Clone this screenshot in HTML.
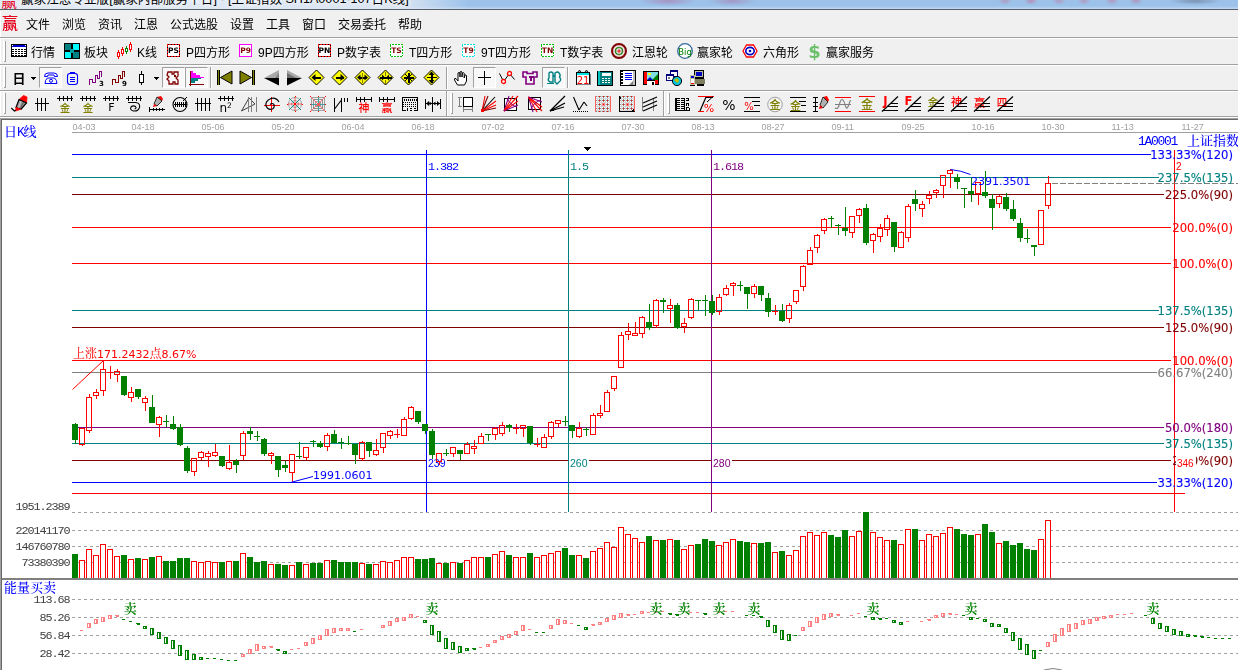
<!DOCTYPE html>
<html lang="zh-CN"><head><meta charset="utf-8"><title>赢家江恩专业版</title>
<style>
html,body{margin:0;padding:0;}
body{width:1238px;height:670px;overflow:hidden;position:relative;background:#f0f0f0;font-family:"Liberation Sans","Noto Sans CJK SC",sans-serif;font-size:12px;color:#000;}
.abs{position:absolute;}
.title{left:0;top:0;width:1238px;height:9px;overflow:hidden;background:
radial-gradient(ellipse 28px 5px at 668px 1px,rgba(170,110,160,.55),rgba(170,110,160,0)),
radial-gradient(ellipse 24px 5px at 732px 1px,rgba(170,110,160,.5),rgba(170,110,160,0)),
radial-gradient(ellipse 7px 4px at 1005px 1px,rgba(200,110,150,.45),rgba(200,110,150,0)),
radial-gradient(ellipse 7px 4px at 1031px 1px,rgba(200,90,130,.5),rgba(200,110,150,0)),
radial-gradient(ellipse 7px 4px at 1059px 1px,rgba(200,110,150,.45),rgba(200,110,150,0)),
radial-gradient(ellipse 7px 4px at 1084px 1px,rgba(200,110,150,.45),rgba(200,110,150,0)),
radial-gradient(ellipse 7px 4px at 1112px 1px,rgba(200,110,150,.5),rgba(200,110,150,0)),
radial-gradient(ellipse 7px 4px at 1136px 1px,rgba(200,100,140,.45),rgba(200,110,150,0)),
radial-gradient(ellipse 26px 4px at 1195px 1px,rgba(90,100,120,.5),rgba(90,100,120,0)),
linear-gradient(90deg,rgba(226,234,244,1) 0,rgba(222,231,243,.95) 400px,rgba(222,231,243,0) 470px),
linear-gradient(#9cc2ea 0,#9cc2ea 6px,#b4d0ee 8px,#c8dcf2 9px);}
.title i{position:absolute;left:1px;top:-12.5px;font-style:normal;font-size:16px;color:#e8001c;}
.title span{position:absolute;left:21px;top:-11.6px;font-size:12.6px;white-space:nowrap;text-shadow:0 0 4px #fff,0 0 6px #fff;}
.tline{left:0;width:1238px;height:1px;}
.mi{top:16px;font-size:12px;line-height:18px;height:18px;white-space:nowrap;}
.tb{font-size:12px;line-height:18px;height:18px;white-space:nowrap;}
.ic{width:16px;height:16px;overflow:visible;}
.grip{width:2px;background:#fff;border-right:1px solid #a0a0a0;}
body:before{content:'';position:absolute;left:0;top:11px;width:1px;height:105px;background:#fff;}
.sep{width:1px;background:#a0a0a0;border-right:1px solid #fff;}
.pressed{border:1px solid;border-color:#a0a0a0 #fff #fff #a0a0a0;background:#f8f8f8;box-sizing:border-box;}
svg.chart{position:absolute;left:0;top:0;will-change:transform;}
svg.chart text{font-family:"DejaVu Sans","Noto Sans CJK SC",sans-serif;}
svg.chart .dt{font-family:"Liberation Sans",sans-serif;font-size:9px;fill:#a0a0a0;}
svg.chart .lab{font-family:"DejaVu Sans","Noto Serif CJK SC",sans-serif;font-size:11.6px;}
svg.chart .l11{font-size:11px;}
svg.chart .sm{font-family:"Liberation Sans",sans-serif;font-size:10px;}
svg.chart .song12{font-family:"Liberation Mono","Noto Serif CJK SC",serif;font-size:12px;}
svg.chart .song13{font-family:"Liberation Mono","Noto Serif CJK SC",serif;font-size:13px;font-weight:500;}
svg.chart .nar{letter-spacing:-1.3px;}
svg.chart .mono{font-family:"Liberation Mono",monospace;font-size:11.8px;letter-spacing:-1.08px;}
svg.chart .sell{font-family:"Liberation Serif","Noto Serif CJK SC",serif;font-size:13px;fill:#008000;font-weight:600;}
</style></head><body>
<svg class="chart" width="1238" height="670" viewBox="0 0 1238 670" shape-rendering="crispEdges"><rect x="0" y="118" width="1238" height="552" fill="#fff"/><rect x="0" y="118" width="1238" height="1" fill="#a0a0a0"/><rect x="0" y="119" width="1238" height="1" fill="#696969"/><rect x="0" y="118" width="1" height="552" fill="#a0a0a0"/><rect x="1" y="119" width="1" height="551" fill="#696969"/><rect x="72" y="132" width="1166" height="1" fill="#a0a0a0"/><text x="72.5" y="129.6" class="dt">04-03</text><text x="131.5" y="129.6" class="dt">04-18</text><text x="201.5" y="129.6" class="dt">05-06</text><text x="271.5" y="129.6" class="dt">05-20</text><text x="341.5" y="129.6" class="dt">06-04</text><text x="411.5" y="129.6" class="dt">06-18</text><text x="481.5" y="129.6" class="dt">07-02</text><text x="551.5" y="129.6" class="dt">07-16</text><text x="621.5" y="129.6" class="dt">07-30</text><text x="691.5" y="129.6" class="dt">08-13</text><text x="761.5" y="129.6" class="dt">08-27</text><text x="831.5" y="129.6" class="dt">09-11</text><text x="901.5" y="129.6" class="dt">09-25</text><text x="971.5" y="129.6" class="dt">10-16</text><text x="1041.5" y="129.6" class="dt">10-30</text><text x="1111.5" y="129.6" class="dt">11-13</text><text x="1181.5" y="129.6" class="dt">11-27</text><rect x="72" y="154" width="1079" height="1" fill="#0000ff"/><rect x="72" y="177" width="1087" height="1" fill="#008080"/><rect x="72" y="194" width="1092" height="1" fill="#800000"/><rect x="72" y="227" width="1099" height="1" fill="#ff0000"/><rect x="72" y="263" width="1099" height="1" fill="#ff0000"/><rect x="72" y="310" width="1087" height="1" fill="#008080"/><rect x="72" y="327" width="1092" height="1" fill="#800000"/><rect x="72" y="360" width="1099" height="1" fill="#ff0000"/><rect x="72" y="372" width="1085" height="1" fill="#808080"/><rect x="72" y="427" width="1092" height="1" fill="#800080"/><rect x="72" y="443" width="1092" height="1" fill="#008080"/><rect x="72" y="460" width="1099" height="1" fill="#800000"/><rect x="72" y="482" width="1085" height="1" fill="#0000ff"/><rect x="72" y="493" width="1113" height="1" fill="#ff0000"/><rect x="426" y="150" width="1" height="362" fill="#0000ff"/><rect x="568" y="150" width="1" height="362" fill="#008080"/><rect x="711" y="150" width="1" height="362" fill="#800080"/><rect x="1174" y="150" width="1" height="362" fill="#ff0000"/><line x1="72" y1="512.5" x2="1238" y2="512.5" stroke="#a0a0a0" stroke-width="1" stroke-dasharray="3 3"/><line x1="72" y1="530.5" x2="1238" y2="530.5" stroke="#a0a0a0" stroke-width="1" stroke-dasharray="3 3"/><line x1="72" y1="546.5" x2="1238" y2="546.5" stroke="#a0a0a0" stroke-width="1" stroke-dasharray="3 3"/><line x1="72" y1="562.5" x2="1238" y2="562.5" stroke="#a0a0a0" stroke-width="1" stroke-dasharray="3 3"/><line x1="72" y1="599.5" x2="1238" y2="599.5" stroke="#a0a0a0" stroke-width="1" stroke-dasharray="3 3"/><line x1="72" y1="617.5" x2="1238" y2="617.5" stroke="#a0a0a0" stroke-width="1" stroke-dasharray="3 3"/><line x1="72" y1="635.5" x2="1238" y2="635.5" stroke="#a0a0a0" stroke-width="1" stroke-dasharray="3 3"/><line x1="72" y1="653.5" x2="1238" y2="653.5" stroke="#a0a0a0" stroke-width="1" stroke-dasharray="3 3"/><line x1="1052" y1="183.5" x2="1238" y2="183.5" stroke="#808080" stroke-width="1" stroke-dasharray="6 2"/><rect x="427" y="458" width="20" height="11" fill="#fff"/><text x="428" y="467" class="sm" style="font-size:10.5px" fill="#0000ff">239</text><rect x="569" y="458" width="20" height="11" fill="#fff"/><text x="570" y="467" class="sm" style="font-size:10.5px" fill="#008080">260</text><rect x="712" y="458" width="20" height="11" fill="#fff"/><text x="713" y="467" class="sm" style="font-size:10.5px" fill="#800080">280</text><rect x="75" y="423" width="1" height="1" fill="#008000"/><rect x="75" y="440" width="1" height="4" fill="#008000"/><rect x="72" y="424" width="6" height="16" fill="#008000"/><rect x="82" y="445" width="1" height="1" fill="#ff0000"/><rect x="79" y="428" width="6" height="1" fill="#ff0000"/><rect x="79" y="444" width="6" height="1" fill="#ff0000"/><rect x="79" y="429" width="1" height="15" fill="#ff0000"/><rect x="84" y="429" width="1" height="15" fill="#ff0000"/><rect x="89" y="394" width="1" height="3" fill="#ff0000"/><rect x="89" y="431" width="1" height="2" fill="#ff0000"/><rect x="86" y="397" width="6" height="1" fill="#ff0000"/><rect x="86" y="430" width="6" height="1" fill="#ff0000"/><rect x="86" y="398" width="1" height="32" fill="#ff0000"/><rect x="91" y="398" width="1" height="32" fill="#ff0000"/><rect x="96" y="389" width="1" height="3" fill="#ff0000"/><rect x="96" y="396" width="1" height="3" fill="#ff0000"/><rect x="93" y="392" width="6" height="1" fill="#ff0000"/><rect x="93" y="395" width="6" height="1" fill="#ff0000"/><rect x="93" y="393" width="1" height="2" fill="#ff0000"/><rect x="98" y="393" width="1" height="2" fill="#ff0000"/><rect x="103" y="361" width="1" height="8" fill="#ff0000"/><rect x="103" y="391" width="1" height="5" fill="#ff0000"/><rect x="100" y="369" width="6" height="1" fill="#ff0000"/><rect x="100" y="390" width="6" height="1" fill="#ff0000"/><rect x="100" y="370" width="1" height="20" fill="#ff0000"/><rect x="105" y="370" width="1" height="20" fill="#ff0000"/><rect x="110" y="366" width="1" height="6" fill="#ff0000"/><rect x="110" y="373" width="1" height="6" fill="#ff0000"/><rect x="107" y="372" width="6" height="1" fill="#ff0000"/><rect x="117" y="369" width="1" height="2" fill="#ff0000"/><rect x="117" y="375" width="1" height="7" fill="#ff0000"/><rect x="114" y="371" width="6" height="1" fill="#ff0000"/><rect x="114" y="374" width="6" height="1" fill="#ff0000"/><rect x="114" y="372" width="1" height="2" fill="#ff0000"/><rect x="119" y="372" width="1" height="2" fill="#ff0000"/><rect x="124" y="395" width="1" height="1" fill="#008000"/><rect x="121" y="376" width="6" height="19" fill="#008000"/><rect x="131" y="387" width="1" height="5" fill="#ff0000"/><rect x="131" y="398" width="1" height="4" fill="#ff0000"/><rect x="128" y="392" width="6" height="1" fill="#ff0000"/><rect x="128" y="397" width="6" height="1" fill="#ff0000"/><rect x="128" y="393" width="1" height="4" fill="#ff0000"/><rect x="133" y="393" width="1" height="4" fill="#ff0000"/><rect x="138" y="397" width="1" height="2" fill="#008000"/><rect x="135" y="389" width="6" height="8" fill="#008000"/><rect x="145" y="396" width="1" height="2" fill="#ff0000"/><rect x="145" y="403" width="1" height="8" fill="#ff0000"/><rect x="142" y="398" width="6" height="1" fill="#ff0000"/><rect x="142" y="402" width="6" height="1" fill="#ff0000"/><rect x="142" y="399" width="1" height="3" fill="#ff0000"/><rect x="147" y="399" width="1" height="3" fill="#ff0000"/><rect x="152" y="395" width="1" height="12" fill="#008000"/><rect x="149" y="407" width="6" height="16" fill="#008000"/><rect x="159" y="416" width="1" height="1" fill="#ff0000"/><rect x="159" y="425" width="1" height="12" fill="#ff0000"/><rect x="156" y="417" width="6" height="1" fill="#ff0000"/><rect x="156" y="424" width="6" height="1" fill="#ff0000"/><rect x="156" y="418" width="1" height="6" fill="#ff0000"/><rect x="161" y="418" width="1" height="6" fill="#ff0000"/><rect x="166" y="415" width="1" height="6" fill="#008000"/><rect x="166" y="422" width="1" height="5" fill="#008000"/><rect x="163" y="421" width="6" height="1" fill="#008000"/><rect x="173" y="416" width="1" height="8" fill="#008000"/><rect x="173" y="429" width="1" height="1" fill="#008000"/><rect x="170" y="424" width="6" height="5" fill="#008000"/><rect x="180" y="424" width="1" height="3" fill="#008000"/><rect x="180" y="445" width="1" height="1" fill="#008000"/><rect x="177" y="427" width="6" height="18" fill="#008000"/><rect x="187" y="446" width="1" height="2" fill="#008000"/><rect x="187" y="471" width="1" height="2" fill="#008000"/><rect x="184" y="448" width="6" height="23" fill="#008000"/><rect x="194" y="472" width="1" height="4" fill="#ff0000"/><rect x="191" y="458" width="6" height="1" fill="#ff0000"/><rect x="191" y="471" width="6" height="1" fill="#ff0000"/><rect x="191" y="459" width="1" height="12" fill="#ff0000"/><rect x="196" y="459" width="1" height="12" fill="#ff0000"/><rect x="201" y="451" width="1" height="1" fill="#ff0000"/><rect x="201" y="458" width="1" height="2" fill="#ff0000"/><rect x="198" y="452" width="6" height="1" fill="#ff0000"/><rect x="198" y="457" width="6" height="1" fill="#ff0000"/><rect x="198" y="453" width="1" height="4" fill="#ff0000"/><rect x="203" y="453" width="1" height="4" fill="#ff0000"/><rect x="208" y="451" width="1" height="2" fill="#ff0000"/><rect x="208" y="457" width="1" height="10" fill="#ff0000"/><rect x="205" y="453" width="6" height="1" fill="#ff0000"/><rect x="205" y="456" width="6" height="1" fill="#ff0000"/><rect x="205" y="454" width="1" height="2" fill="#ff0000"/><rect x="210" y="454" width="1" height="2" fill="#ff0000"/><rect x="215" y="444" width="1" height="8" fill="#ff0000"/><rect x="215" y="456" width="1" height="1" fill="#ff0000"/><rect x="212" y="452" width="6" height="1" fill="#ff0000"/><rect x="212" y="455" width="6" height="1" fill="#ff0000"/><rect x="212" y="453" width="1" height="2" fill="#ff0000"/><rect x="217" y="453" width="1" height="2" fill="#ff0000"/><rect x="222" y="466" width="1" height="1" fill="#008000"/><rect x="219" y="456" width="6" height="10" fill="#008000"/><rect x="229" y="445" width="1" height="17" fill="#ff0000"/><rect x="229" y="469" width="1" height="1" fill="#ff0000"/><rect x="226" y="462" width="6" height="1" fill="#ff0000"/><rect x="226" y="468" width="6" height="1" fill="#ff0000"/><rect x="226" y="463" width="1" height="5" fill="#ff0000"/><rect x="231" y="463" width="1" height="5" fill="#ff0000"/><rect x="236" y="459" width="1" height="2" fill="#008000"/><rect x="236" y="465" width="1" height="8" fill="#008000"/><rect x="233" y="461" width="6" height="4" fill="#008000"/><rect x="243" y="431" width="1" height="2" fill="#ff0000"/><rect x="243" y="456" width="1" height="4" fill="#ff0000"/><rect x="240" y="433" width="6" height="1" fill="#ff0000"/><rect x="240" y="455" width="6" height="1" fill="#ff0000"/><rect x="240" y="434" width="1" height="21" fill="#ff0000"/><rect x="245" y="434" width="1" height="21" fill="#ff0000"/><rect x="250" y="427" width="1" height="4" fill="#008000"/><rect x="250" y="434" width="1" height="6" fill="#008000"/><rect x="247" y="431" width="6" height="3" fill="#008000"/><rect x="257" y="431" width="1" height="5" fill="#008000"/><rect x="257" y="437" width="1" height="4" fill="#008000"/><rect x="254" y="436" width="6" height="1" fill="#008000"/><rect x="264" y="438" width="1" height="1" fill="#008000"/><rect x="264" y="454" width="1" height="2" fill="#008000"/><rect x="261" y="439" width="6" height="15" fill="#008000"/><rect x="271" y="452" width="1" height="1" fill="#ff0000"/><rect x="271" y="456" width="1" height="8" fill="#ff0000"/><rect x="268" y="453" width="6" height="1" fill="#ff0000"/><rect x="268" y="455" width="6" height="1" fill="#ff0000"/><rect x="268" y="454" width="1" height="1" fill="#ff0000"/><rect x="273" y="454" width="1" height="1" fill="#ff0000"/><rect x="278" y="470" width="1" height="7" fill="#008000"/><rect x="275" y="456" width="6" height="14" fill="#008000"/><rect x="285" y="461" width="1" height="4" fill="#008000"/><rect x="285" y="468" width="1" height="4" fill="#008000"/><rect x="282" y="465" width="6" height="3" fill="#008000"/><rect x="292" y="473" width="1" height="9" fill="#ff0000"/><rect x="289" y="454" width="6" height="1" fill="#ff0000"/><rect x="289" y="472" width="6" height="1" fill="#ff0000"/><rect x="289" y="455" width="1" height="17" fill="#ff0000"/><rect x="294" y="455" width="1" height="17" fill="#ff0000"/><rect x="299" y="442" width="1" height="14" fill="#008000"/><rect x="299" y="457" width="1" height="2" fill="#008000"/><rect x="296" y="456" width="6" height="1" fill="#008000"/><rect x="306" y="458" width="1" height="2" fill="#ff0000"/><rect x="303" y="447" width="6" height="1" fill="#ff0000"/><rect x="303" y="457" width="6" height="1" fill="#ff0000"/><rect x="303" y="448" width="1" height="9" fill="#ff0000"/><rect x="308" y="448" width="1" height="9" fill="#ff0000"/><rect x="313" y="440" width="1" height="1" fill="#008000"/><rect x="313" y="442" width="1" height="5" fill="#008000"/><rect x="310" y="441" width="6" height="1" fill="#008000"/><rect x="320" y="441" width="1" height="2" fill="#008000"/><rect x="320" y="447" width="1" height="1" fill="#008000"/><rect x="317" y="443" width="6" height="4" fill="#008000"/><rect x="327" y="433" width="1" height="2" fill="#ff0000"/><rect x="327" y="447" width="1" height="4" fill="#ff0000"/><rect x="324" y="435" width="6" height="1" fill="#ff0000"/><rect x="324" y="446" width="6" height="1" fill="#ff0000"/><rect x="324" y="436" width="1" height="10" fill="#ff0000"/><rect x="329" y="436" width="1" height="10" fill="#ff0000"/><rect x="334" y="430" width="1" height="4" fill="#008000"/><rect x="331" y="434" width="6" height="9" fill="#008000"/><rect x="341" y="438" width="1" height="4" fill="#008000"/><rect x="341" y="443" width="1" height="6" fill="#008000"/><rect x="338" y="442" width="6" height="1" fill="#008000"/><rect x="348" y="436" width="1" height="7" fill="#008000"/><rect x="348" y="444" width="1" height="1" fill="#008000"/><rect x="345" y="443" width="6" height="1" fill="#008000"/><rect x="355" y="455" width="1" height="9" fill="#008000"/><rect x="352" y="444" width="6" height="11" fill="#008000"/><rect x="362" y="441" width="1" height="1" fill="#ff0000"/><rect x="362" y="459" width="1" height="2" fill="#ff0000"/><rect x="359" y="442" width="6" height="1" fill="#ff0000"/><rect x="359" y="458" width="6" height="1" fill="#ff0000"/><rect x="359" y="443" width="1" height="15" fill="#ff0000"/><rect x="364" y="443" width="1" height="15" fill="#ff0000"/><rect x="369" y="451" width="1" height="6" fill="#008000"/><rect x="366" y="442" width="6" height="9" fill="#008000"/><rect x="376" y="439" width="1" height="11" fill="#ff0000"/><rect x="376" y="455" width="1" height="1" fill="#ff0000"/><rect x="373" y="450" width="6" height="1" fill="#ff0000"/><rect x="373" y="454" width="6" height="1" fill="#ff0000"/><rect x="373" y="451" width="1" height="3" fill="#ff0000"/><rect x="378" y="451" width="1" height="3" fill="#ff0000"/><rect x="383" y="448" width="1" height="5" fill="#ff0000"/><rect x="380" y="433" width="6" height="1" fill="#ff0000"/><rect x="380" y="447" width="6" height="1" fill="#ff0000"/><rect x="380" y="434" width="1" height="13" fill="#ff0000"/><rect x="385" y="434" width="1" height="13" fill="#ff0000"/><rect x="390" y="430" width="1" height="1" fill="#ff0000"/><rect x="390" y="436" width="1" height="3" fill="#ff0000"/><rect x="387" y="431" width="6" height="1" fill="#ff0000"/><rect x="387" y="435" width="6" height="1" fill="#ff0000"/><rect x="387" y="432" width="1" height="3" fill="#ff0000"/><rect x="392" y="432" width="1" height="3" fill="#ff0000"/><rect x="397" y="429" width="1" height="5" fill="#ff0000"/><rect x="397" y="435" width="1" height="3" fill="#ff0000"/><rect x="394" y="434" width="6" height="1" fill="#ff0000"/><rect x="404" y="417" width="1" height="2" fill="#ff0000"/><rect x="401" y="419" width="6" height="1" fill="#ff0000"/><rect x="401" y="435" width="6" height="1" fill="#ff0000"/><rect x="401" y="420" width="1" height="15" fill="#ff0000"/><rect x="406" y="420" width="1" height="15" fill="#ff0000"/><rect x="411" y="406" width="1" height="1" fill="#ff0000"/><rect x="411" y="419" width="1" height="1" fill="#ff0000"/><rect x="408" y="407" width="6" height="1" fill="#ff0000"/><rect x="408" y="418" width="6" height="1" fill="#ff0000"/><rect x="408" y="408" width="1" height="10" fill="#ff0000"/><rect x="413" y="408" width="1" height="10" fill="#ff0000"/><rect x="418" y="422" width="1" height="2" fill="#008000"/><rect x="415" y="411" width="6" height="11" fill="#008000"/><rect x="425" y="431" width="1" height="3" fill="#008000"/><rect x="422" y="424" width="6" height="7" fill="#008000"/><rect x="432" y="429" width="1" height="2" fill="#008000"/><rect x="432" y="455" width="1" height="4" fill="#008000"/><rect x="429" y="431" width="6" height="24" fill="#008000"/><rect x="439" y="462" width="1" height="3" fill="#ff0000"/><rect x="436" y="453" width="6" height="1" fill="#ff0000"/><rect x="436" y="461" width="6" height="1" fill="#ff0000"/><rect x="436" y="454" width="1" height="7" fill="#ff0000"/><rect x="441" y="454" width="1" height="7" fill="#ff0000"/><rect x="446" y="449" width="1" height="4" fill="#008000"/><rect x="446" y="454" width="1" height="2" fill="#008000"/><rect x="443" y="453" width="6" height="1" fill="#008000"/><rect x="453" y="454" width="1" height="3" fill="#ff0000"/><rect x="450" y="447" width="6" height="1" fill="#ff0000"/><rect x="450" y="453" width="6" height="1" fill="#ff0000"/><rect x="450" y="448" width="1" height="5" fill="#ff0000"/><rect x="455" y="448" width="1" height="5" fill="#ff0000"/><rect x="460" y="454" width="1" height="6" fill="#008000"/><rect x="457" y="450" width="6" height="4" fill="#008000"/><rect x="467" y="442" width="1" height="2" fill="#ff0000"/><rect x="464" y="444" width="6" height="1" fill="#ff0000"/><rect x="464" y="453" width="6" height="1" fill="#ff0000"/><rect x="464" y="445" width="1" height="8" fill="#ff0000"/><rect x="469" y="445" width="1" height="8" fill="#ff0000"/><rect x="474" y="440" width="1" height="6" fill="#ff0000"/><rect x="474" y="449" width="1" height="5" fill="#ff0000"/><rect x="471" y="446" width="6" height="1" fill="#ff0000"/><rect x="471" y="448" width="6" height="1" fill="#ff0000"/><rect x="471" y="447" width="1" height="1" fill="#ff0000"/><rect x="476" y="447" width="1" height="1" fill="#ff0000"/><rect x="481" y="433" width="1" height="3" fill="#ff0000"/><rect x="478" y="436" width="6" height="1" fill="#ff0000"/><rect x="478" y="443" width="6" height="1" fill="#ff0000"/><rect x="478" y="437" width="1" height="6" fill="#ff0000"/><rect x="483" y="437" width="1" height="6" fill="#ff0000"/><rect x="488" y="435" width="1" height="6" fill="#008000"/><rect x="485" y="434" width="6" height="1" fill="#008000"/><rect x="495" y="427" width="1" height="1" fill="#ff0000"/><rect x="495" y="435" width="1" height="5" fill="#ff0000"/><rect x="492" y="428" width="6" height="1" fill="#ff0000"/><rect x="492" y="434" width="6" height="1" fill="#ff0000"/><rect x="492" y="429" width="1" height="5" fill="#ff0000"/><rect x="497" y="429" width="1" height="5" fill="#ff0000"/><rect x="502" y="422" width="1" height="3" fill="#ff0000"/><rect x="502" y="434" width="1" height="2" fill="#ff0000"/><rect x="499" y="425" width="6" height="1" fill="#ff0000"/><rect x="499" y="433" width="6" height="1" fill="#ff0000"/><rect x="499" y="426" width="1" height="7" fill="#ff0000"/><rect x="504" y="426" width="1" height="7" fill="#ff0000"/><rect x="509" y="424" width="1" height="1" fill="#008000"/><rect x="509" y="428" width="1" height="4" fill="#008000"/><rect x="506" y="425" width="6" height="3" fill="#008000"/><rect x="516" y="424" width="1" height="4" fill="#ff0000"/><rect x="516" y="429" width="1" height="5" fill="#ff0000"/><rect x="513" y="428" width="6" height="1" fill="#ff0000"/><rect x="523" y="429" width="1" height="8" fill="#ff0000"/><rect x="520" y="425" width="6" height="1" fill="#ff0000"/><rect x="520" y="428" width="6" height="1" fill="#ff0000"/><rect x="520" y="426" width="1" height="2" fill="#ff0000"/><rect x="525" y="426" width="1" height="2" fill="#ff0000"/><rect x="530" y="443" width="1" height="2" fill="#008000"/><rect x="527" y="426" width="6" height="17" fill="#008000"/><rect x="537" y="438" width="1" height="6" fill="#ff0000"/><rect x="537" y="445" width="1" height="2" fill="#ff0000"/><rect x="534" y="444" width="6" height="1" fill="#ff0000"/><rect x="544" y="434" width="1" height="3" fill="#ff0000"/><rect x="541" y="437" width="6" height="1" fill="#ff0000"/><rect x="541" y="447" width="6" height="1" fill="#ff0000"/><rect x="541" y="438" width="1" height="9" fill="#ff0000"/><rect x="546" y="438" width="1" height="9" fill="#ff0000"/><rect x="551" y="421" width="1" height="1" fill="#ff0000"/><rect x="551" y="437" width="1" height="2" fill="#ff0000"/><rect x="548" y="422" width="6" height="1" fill="#ff0000"/><rect x="548" y="436" width="6" height="1" fill="#ff0000"/><rect x="548" y="423" width="1" height="13" fill="#ff0000"/><rect x="553" y="423" width="1" height="13" fill="#ff0000"/><rect x="558" y="424" width="1" height="3" fill="#ff0000"/><rect x="555" y="420" width="6" height="1" fill="#ff0000"/><rect x="555" y="423" width="6" height="1" fill="#ff0000"/><rect x="555" y="421" width="1" height="2" fill="#ff0000"/><rect x="560" y="421" width="1" height="2" fill="#ff0000"/><rect x="565" y="416" width="1" height="5" fill="#008000"/><rect x="565" y="422" width="1" height="4" fill="#008000"/><rect x="562" y="421" width="6" height="1" fill="#008000"/><rect x="572" y="431" width="1" height="7" fill="#008000"/><rect x="569" y="425" width="6" height="6" fill="#008000"/><rect x="579" y="422" width="1" height="6" fill="#ff0000"/><rect x="579" y="437" width="1" height="1" fill="#ff0000"/><rect x="576" y="428" width="6" height="1" fill="#ff0000"/><rect x="576" y="436" width="6" height="1" fill="#ff0000"/><rect x="576" y="429" width="1" height="7" fill="#ff0000"/><rect x="581" y="429" width="1" height="7" fill="#ff0000"/><rect x="586" y="427" width="1" height="2" fill="#008000"/><rect x="586" y="430" width="1" height="6" fill="#008000"/><rect x="583" y="429" width="6" height="1" fill="#008000"/><rect x="593" y="413" width="1" height="2" fill="#ff0000"/><rect x="590" y="415" width="6" height="1" fill="#ff0000"/><rect x="590" y="434" width="6" height="1" fill="#ff0000"/><rect x="590" y="416" width="1" height="18" fill="#ff0000"/><rect x="595" y="416" width="1" height="18" fill="#ff0000"/><rect x="600" y="405" width="1" height="8" fill="#ff0000"/><rect x="600" y="416" width="1" height="2" fill="#ff0000"/><rect x="597" y="413" width="6" height="1" fill="#ff0000"/><rect x="597" y="415" width="6" height="1" fill="#ff0000"/><rect x="597" y="414" width="1" height="1" fill="#ff0000"/><rect x="602" y="414" width="1" height="1" fill="#ff0000"/><rect x="607" y="390" width="1" height="2" fill="#ff0000"/><rect x="604" y="392" width="6" height="1" fill="#ff0000"/><rect x="604" y="411" width="6" height="1" fill="#ff0000"/><rect x="604" y="393" width="1" height="18" fill="#ff0000"/><rect x="609" y="393" width="1" height="18" fill="#ff0000"/><rect x="614" y="389" width="1" height="2" fill="#ff0000"/><rect x="611" y="376" width="6" height="1" fill="#ff0000"/><rect x="611" y="388" width="6" height="1" fill="#ff0000"/><rect x="611" y="377" width="1" height="11" fill="#ff0000"/><rect x="616" y="377" width="1" height="11" fill="#ff0000"/><rect x="621" y="332" width="1" height="3" fill="#ff0000"/><rect x="618" y="335" width="6" height="1" fill="#ff0000"/><rect x="618" y="367" width="6" height="1" fill="#ff0000"/><rect x="618" y="336" width="1" height="31" fill="#ff0000"/><rect x="623" y="336" width="1" height="31" fill="#ff0000"/><rect x="628" y="323" width="1" height="8" fill="#ff0000"/><rect x="628" y="335" width="1" height="5" fill="#ff0000"/><rect x="625" y="331" width="6" height="1" fill="#ff0000"/><rect x="625" y="334" width="6" height="1" fill="#ff0000"/><rect x="625" y="332" width="1" height="2" fill="#ff0000"/><rect x="630" y="332" width="1" height="2" fill="#ff0000"/><rect x="635" y="322" width="1" height="11" fill="#ff0000"/><rect x="632" y="333" width="6" height="1" fill="#ff0000"/><rect x="632" y="335" width="6" height="1" fill="#ff0000"/><rect x="632" y="334" width="1" height="1" fill="#ff0000"/><rect x="637" y="334" width="1" height="1" fill="#ff0000"/><rect x="642" y="316" width="1" height="1" fill="#ff0000"/><rect x="642" y="334" width="1" height="4" fill="#ff0000"/><rect x="639" y="317" width="6" height="1" fill="#ff0000"/><rect x="639" y="333" width="6" height="1" fill="#ff0000"/><rect x="639" y="318" width="1" height="15" fill="#ff0000"/><rect x="644" y="318" width="1" height="15" fill="#ff0000"/><rect x="649" y="304" width="1" height="18" fill="#008000"/><rect x="649" y="328" width="1" height="2" fill="#008000"/><rect x="646" y="322" width="6" height="6" fill="#008000"/><rect x="656" y="299" width="1" height="1" fill="#ff0000"/><rect x="656" y="326" width="1" height="2" fill="#ff0000"/><rect x="653" y="300" width="6" height="1" fill="#ff0000"/><rect x="653" y="325" width="6" height="1" fill="#ff0000"/><rect x="653" y="301" width="1" height="24" fill="#ff0000"/><rect x="658" y="301" width="1" height="24" fill="#ff0000"/><rect x="663" y="298" width="1" height="2" fill="#008000"/><rect x="663" y="302" width="1" height="11" fill="#008000"/><rect x="660" y="300" width="6" height="2" fill="#008000"/><rect x="670" y="299" width="1" height="6" fill="#ff0000"/><rect x="670" y="309" width="1" height="14" fill="#ff0000"/><rect x="667" y="305" width="6" height="1" fill="#ff0000"/><rect x="667" y="308" width="6" height="1" fill="#ff0000"/><rect x="667" y="306" width="1" height="2" fill="#ff0000"/><rect x="672" y="306" width="1" height="2" fill="#ff0000"/><rect x="677" y="303" width="1" height="2" fill="#008000"/><rect x="677" y="328" width="1" height="1" fill="#008000"/><rect x="674" y="305" width="6" height="23" fill="#008000"/><rect x="684" y="318" width="1" height="5" fill="#ff0000"/><rect x="684" y="327" width="1" height="6" fill="#ff0000"/><rect x="681" y="323" width="6" height="1" fill="#ff0000"/><rect x="681" y="326" width="6" height="1" fill="#ff0000"/><rect x="681" y="324" width="1" height="2" fill="#ff0000"/><rect x="686" y="324" width="1" height="2" fill="#ff0000"/><rect x="691" y="298" width="1" height="1" fill="#ff0000"/><rect x="691" y="318" width="1" height="1" fill="#ff0000"/><rect x="688" y="299" width="6" height="1" fill="#ff0000"/><rect x="688" y="317" width="6" height="1" fill="#ff0000"/><rect x="688" y="300" width="1" height="17" fill="#ff0000"/><rect x="693" y="300" width="1" height="17" fill="#ff0000"/><rect x="698" y="301" width="1" height="9" fill="#008000"/><rect x="695" y="300" width="6" height="1" fill="#008000"/><rect x="705" y="295" width="1" height="5" fill="#008000"/><rect x="705" y="301" width="1" height="15" fill="#008000"/><rect x="702" y="300" width="6" height="1" fill="#008000"/><rect x="712" y="295" width="1" height="6" fill="#008000"/><rect x="712" y="313" width="1" height="2" fill="#008000"/><rect x="709" y="301" width="6" height="12" fill="#008000"/><rect x="719" y="294" width="1" height="3" fill="#ff0000"/><rect x="719" y="312" width="1" height="3" fill="#ff0000"/><rect x="716" y="297" width="6" height="1" fill="#ff0000"/><rect x="716" y="311" width="6" height="1" fill="#ff0000"/><rect x="716" y="298" width="1" height="13" fill="#ff0000"/><rect x="721" y="298" width="1" height="13" fill="#ff0000"/><rect x="726" y="285" width="1" height="3" fill="#ff0000"/><rect x="726" y="295" width="1" height="1" fill="#ff0000"/><rect x="723" y="288" width="6" height="1" fill="#ff0000"/><rect x="723" y="294" width="6" height="1" fill="#ff0000"/><rect x="723" y="289" width="1" height="5" fill="#ff0000"/><rect x="728" y="289" width="1" height="5" fill="#ff0000"/><rect x="733" y="282" width="1" height="1" fill="#ff0000"/><rect x="733" y="286" width="1" height="10" fill="#ff0000"/><rect x="730" y="283" width="6" height="1" fill="#ff0000"/><rect x="730" y="285" width="6" height="1" fill="#ff0000"/><rect x="730" y="284" width="1" height="1" fill="#ff0000"/><rect x="735" y="284" width="1" height="1" fill="#ff0000"/><rect x="740" y="281" width="1" height="4" fill="#008000"/><rect x="740" y="286" width="1" height="5" fill="#008000"/><rect x="737" y="285" width="6" height="1" fill="#008000"/><rect x="747" y="294" width="1" height="15" fill="#008000"/><rect x="744" y="287" width="6" height="7" fill="#008000"/><rect x="754" y="284" width="1" height="2" fill="#ff0000"/><rect x="754" y="294" width="1" height="4" fill="#ff0000"/><rect x="751" y="286" width="6" height="1" fill="#ff0000"/><rect x="751" y="293" width="6" height="1" fill="#ff0000"/><rect x="751" y="287" width="1" height="6" fill="#ff0000"/><rect x="756" y="287" width="1" height="6" fill="#ff0000"/><rect x="761" y="295" width="1" height="6" fill="#008000"/><rect x="758" y="286" width="6" height="9" fill="#008000"/><rect x="768" y="293" width="1" height="5" fill="#008000"/><rect x="768" y="312" width="1" height="5" fill="#008000"/><rect x="765" y="298" width="6" height="14" fill="#008000"/><rect x="775" y="305" width="1" height="6" fill="#ff0000"/><rect x="775" y="312" width="1" height="3" fill="#ff0000"/><rect x="772" y="311" width="6" height="1" fill="#ff0000"/><rect x="782" y="304" width="1" height="7" fill="#008000"/><rect x="782" y="321" width="1" height="1" fill="#008000"/><rect x="779" y="311" width="6" height="10" fill="#008000"/><rect x="789" y="303" width="1" height="2" fill="#ff0000"/><rect x="789" y="319" width="1" height="4" fill="#ff0000"/><rect x="786" y="305" width="6" height="1" fill="#ff0000"/><rect x="786" y="318" width="6" height="1" fill="#ff0000"/><rect x="786" y="306" width="1" height="12" fill="#ff0000"/><rect x="791" y="306" width="1" height="12" fill="#ff0000"/><rect x="796" y="302" width="1" height="2" fill="#ff0000"/><rect x="793" y="290" width="6" height="1" fill="#ff0000"/><rect x="793" y="301" width="6" height="1" fill="#ff0000"/><rect x="793" y="291" width="1" height="10" fill="#ff0000"/><rect x="798" y="291" width="1" height="10" fill="#ff0000"/><rect x="803" y="265" width="1" height="1" fill="#ff0000"/><rect x="803" y="287" width="1" height="4" fill="#ff0000"/><rect x="800" y="266" width="6" height="1" fill="#ff0000"/><rect x="800" y="286" width="6" height="1" fill="#ff0000"/><rect x="800" y="267" width="1" height="19" fill="#ff0000"/><rect x="805" y="267" width="1" height="19" fill="#ff0000"/><rect x="810" y="247" width="1" height="3" fill="#ff0000"/><rect x="807" y="250" width="6" height="1" fill="#ff0000"/><rect x="807" y="264" width="6" height="1" fill="#ff0000"/><rect x="807" y="251" width="1" height="13" fill="#ff0000"/><rect x="812" y="251" width="1" height="13" fill="#ff0000"/><rect x="817" y="234" width="1" height="1" fill="#ff0000"/><rect x="817" y="248" width="1" height="5" fill="#ff0000"/><rect x="814" y="235" width="6" height="1" fill="#ff0000"/><rect x="814" y="247" width="6" height="1" fill="#ff0000"/><rect x="814" y="236" width="1" height="11" fill="#ff0000"/><rect x="819" y="236" width="1" height="11" fill="#ff0000"/><rect x="824" y="218" width="1" height="1" fill="#ff0000"/><rect x="824" y="231" width="1" height="3" fill="#ff0000"/><rect x="821" y="219" width="6" height="1" fill="#ff0000"/><rect x="821" y="230" width="6" height="1" fill="#ff0000"/><rect x="821" y="220" width="1" height="10" fill="#ff0000"/><rect x="826" y="220" width="1" height="10" fill="#ff0000"/><rect x="831" y="216" width="1" height="2" fill="#008000"/><rect x="831" y="219" width="1" height="9" fill="#008000"/><rect x="828" y="218" width="6" height="1" fill="#008000"/><rect x="838" y="224" width="1" height="1" fill="#008000"/><rect x="838" y="226" width="1" height="9" fill="#008000"/><rect x="835" y="225" width="6" height="1" fill="#008000"/><rect x="845" y="207" width="1" height="21" fill="#008000"/><rect x="845" y="231" width="1" height="5" fill="#008000"/><rect x="842" y="228" width="6" height="3" fill="#008000"/><rect x="852" y="233" width="1" height="5" fill="#ff0000"/><rect x="849" y="216" width="6" height="1" fill="#ff0000"/><rect x="849" y="232" width="6" height="1" fill="#ff0000"/><rect x="849" y="217" width="1" height="15" fill="#ff0000"/><rect x="854" y="217" width="1" height="15" fill="#ff0000"/><rect x="859" y="208" width="1" height="1" fill="#ff0000"/><rect x="859" y="216" width="1" height="7" fill="#ff0000"/><rect x="856" y="209" width="6" height="1" fill="#ff0000"/><rect x="856" y="215" width="6" height="1" fill="#ff0000"/><rect x="856" y="210" width="1" height="5" fill="#ff0000"/><rect x="861" y="210" width="1" height="5" fill="#ff0000"/><rect x="866" y="204" width="1" height="4" fill="#008000"/><rect x="866" y="243" width="1" height="2" fill="#008000"/><rect x="863" y="208" width="6" height="35" fill="#008000"/><rect x="873" y="233" width="1" height="1" fill="#ff0000"/><rect x="873" y="241" width="1" height="12" fill="#ff0000"/><rect x="870" y="234" width="6" height="1" fill="#ff0000"/><rect x="870" y="240" width="6" height="1" fill="#ff0000"/><rect x="870" y="235" width="1" height="5" fill="#ff0000"/><rect x="875" y="235" width="1" height="5" fill="#ff0000"/><rect x="880" y="224" width="1" height="4" fill="#ff0000"/><rect x="880" y="237" width="1" height="5" fill="#ff0000"/><rect x="877" y="228" width="6" height="1" fill="#ff0000"/><rect x="877" y="236" width="6" height="1" fill="#ff0000"/><rect x="877" y="229" width="1" height="7" fill="#ff0000"/><rect x="882" y="229" width="1" height="7" fill="#ff0000"/><rect x="887" y="215" width="1" height="3" fill="#ff0000"/><rect x="887" y="230" width="1" height="6" fill="#ff0000"/><rect x="884" y="218" width="6" height="1" fill="#ff0000"/><rect x="884" y="229" width="6" height="1" fill="#ff0000"/><rect x="884" y="219" width="1" height="10" fill="#ff0000"/><rect x="889" y="219" width="1" height="10" fill="#ff0000"/><rect x="894" y="247" width="1" height="5" fill="#008000"/><rect x="891" y="222" width="6" height="25" fill="#008000"/><rect x="901" y="231" width="1" height="1" fill="#ff0000"/><rect x="898" y="232" width="6" height="1" fill="#ff0000"/><rect x="898" y="247" width="6" height="1" fill="#ff0000"/><rect x="898" y="233" width="1" height="14" fill="#ff0000"/><rect x="903" y="233" width="1" height="14" fill="#ff0000"/><rect x="908" y="204" width="1" height="2" fill="#ff0000"/><rect x="908" y="238" width="1" height="4" fill="#ff0000"/><rect x="905" y="206" width="6" height="1" fill="#ff0000"/><rect x="905" y="237" width="6" height="1" fill="#ff0000"/><rect x="905" y="207" width="1" height="30" fill="#ff0000"/><rect x="910" y="207" width="1" height="30" fill="#ff0000"/><rect x="915" y="190" width="1" height="9" fill="#008000"/><rect x="915" y="204" width="1" height="7" fill="#008000"/><rect x="912" y="199" width="6" height="5" fill="#008000"/><rect x="922" y="201" width="1" height="3" fill="#ff0000"/><rect x="922" y="209" width="1" height="8" fill="#ff0000"/><rect x="919" y="204" width="6" height="1" fill="#ff0000"/><rect x="919" y="208" width="6" height="1" fill="#ff0000"/><rect x="919" y="205" width="1" height="3" fill="#ff0000"/><rect x="924" y="205" width="1" height="3" fill="#ff0000"/><rect x="929" y="191" width="1" height="4" fill="#ff0000"/><rect x="929" y="199" width="1" height="5" fill="#ff0000"/><rect x="926" y="195" width="6" height="1" fill="#ff0000"/><rect x="926" y="198" width="6" height="1" fill="#ff0000"/><rect x="926" y="196" width="1" height="2" fill="#ff0000"/><rect x="931" y="196" width="1" height="2" fill="#ff0000"/><rect x="936" y="189" width="1" height="1" fill="#ff0000"/><rect x="936" y="193" width="1" height="5" fill="#ff0000"/><rect x="933" y="190" width="6" height="1" fill="#ff0000"/><rect x="933" y="192" width="6" height="1" fill="#ff0000"/><rect x="933" y="191" width="1" height="1" fill="#ff0000"/><rect x="938" y="191" width="1" height="1" fill="#ff0000"/><rect x="943" y="186" width="1" height="12" fill="#ff0000"/><rect x="940" y="175" width="6" height="1" fill="#ff0000"/><rect x="940" y="185" width="6" height="1" fill="#ff0000"/><rect x="940" y="176" width="1" height="9" fill="#ff0000"/><rect x="945" y="176" width="1" height="9" fill="#ff0000"/><rect x="950" y="169" width="1" height="1" fill="#ff0000"/><rect x="950" y="174" width="1" height="14" fill="#ff0000"/><rect x="947" y="170" width="6" height="1" fill="#ff0000"/><rect x="947" y="173" width="6" height="1" fill="#ff0000"/><rect x="947" y="171" width="1" height="2" fill="#ff0000"/><rect x="952" y="171" width="1" height="2" fill="#ff0000"/><rect x="957" y="174" width="1" height="3" fill="#008000"/><rect x="957" y="182" width="1" height="7" fill="#008000"/><rect x="954" y="177" width="6" height="5" fill="#008000"/><rect x="964" y="189" width="1" height="19" fill="#008000"/><rect x="961" y="188" width="6" height="1" fill="#008000"/><rect x="971" y="178" width="1" height="13" fill="#008000"/><rect x="971" y="194" width="1" height="8" fill="#008000"/><rect x="968" y="191" width="6" height="3" fill="#008000"/><rect x="978" y="194" width="1" height="11" fill="#ff0000"/><rect x="975" y="182" width="6" height="1" fill="#ff0000"/><rect x="975" y="193" width="6" height="1" fill="#ff0000"/><rect x="975" y="183" width="1" height="10" fill="#ff0000"/><rect x="980" y="183" width="1" height="10" fill="#ff0000"/><rect x="985" y="171" width="1" height="21" fill="#008000"/><rect x="985" y="196" width="1" height="2" fill="#008000"/><rect x="982" y="192" width="6" height="4" fill="#008000"/><rect x="992" y="194" width="1" height="5" fill="#008000"/><rect x="992" y="208" width="1" height="22" fill="#008000"/><rect x="989" y="199" width="6" height="9" fill="#008000"/><rect x="999" y="195" width="1" height="1" fill="#ff0000"/><rect x="999" y="204" width="1" height="4" fill="#ff0000"/><rect x="996" y="196" width="6" height="1" fill="#ff0000"/><rect x="996" y="203" width="6" height="1" fill="#ff0000"/><rect x="996" y="197" width="1" height="6" fill="#ff0000"/><rect x="1001" y="197" width="1" height="6" fill="#ff0000"/><rect x="1006" y="193" width="1" height="4" fill="#008000"/><rect x="1006" y="209" width="1" height="2" fill="#008000"/><rect x="1003" y="197" width="6" height="12" fill="#008000"/><rect x="1013" y="200" width="1" height="9" fill="#008000"/><rect x="1013" y="219" width="1" height="2" fill="#008000"/><rect x="1010" y="209" width="6" height="10" fill="#008000"/><rect x="1020" y="218" width="1" height="5" fill="#008000"/><rect x="1020" y="238" width="1" height="4" fill="#008000"/><rect x="1017" y="223" width="6" height="15" fill="#008000"/><rect x="1027" y="229" width="1" height="9" fill="#008000"/><rect x="1027" y="239" width="1" height="4" fill="#008000"/><rect x="1024" y="238" width="6" height="1" fill="#008000"/><rect x="1034" y="247" width="1" height="9" fill="#008000"/><rect x="1031" y="245" width="6" height="2" fill="#008000"/><rect x="1038" y="210" width="6" height="1" fill="#ff0000"/><rect x="1038" y="244" width="6" height="1" fill="#ff0000"/><rect x="1038" y="211" width="1" height="33" fill="#ff0000"/><rect x="1043" y="211" width="1" height="33" fill="#ff0000"/><rect x="1048" y="176" width="1" height="7" fill="#ff0000"/><rect x="1048" y="206" width="1" height="3" fill="#ff0000"/><rect x="1045" y="183" width="6" height="1" fill="#ff0000"/><rect x="1045" y="205" width="6" height="1" fill="#ff0000"/><rect x="1045" y="184" width="1" height="21" fill="#ff0000"/><rect x="1050" y="184" width="1" height="21" fill="#ff0000"/><rect x="72" y="554" width="6" height="24" fill="#008000"/><rect x="79" y="560" width="6" height="18" fill="#ff0000"/><rect x="80" y="561" width="4" height="17" fill="#fff"/><rect x="86" y="549" width="6" height="29" fill="#ff0000"/><rect x="87" y="550" width="4" height="28" fill="#fff"/><rect x="93" y="555" width="6" height="23" fill="#ff0000"/><rect x="94" y="556" width="4" height="22" fill="#fff"/><rect x="100" y="544" width="6" height="34" fill="#ff0000"/><rect x="101" y="545" width="4" height="33" fill="#fff"/><rect x="107" y="549" width="6" height="29" fill="#ff0000"/><rect x="108" y="550" width="4" height="28" fill="#fff"/><rect x="114" y="556" width="6" height="22" fill="#ff0000"/><rect x="115" y="557" width="4" height="21" fill="#fff"/><rect x="121" y="555" width="6" height="23" fill="#008000"/><rect x="128" y="559" width="6" height="19" fill="#ff0000"/><rect x="129" y="560" width="4" height="18" fill="#fff"/><rect x="135" y="558" width="6" height="20" fill="#008000"/><rect x="142" y="559" width="6" height="19" fill="#ff0000"/><rect x="143" y="560" width="4" height="18" fill="#fff"/><rect x="149" y="557" width="6" height="21" fill="#008000"/><rect x="156" y="556" width="6" height="22" fill="#ff0000"/><rect x="157" y="557" width="4" height="21" fill="#fff"/><rect x="163" y="561" width="6" height="17" fill="#008000"/><rect x="170" y="561" width="6" height="17" fill="#008000"/><rect x="177" y="558" width="6" height="20" fill="#008000"/><rect x="184" y="558" width="6" height="20" fill="#008000"/><rect x="191" y="561" width="6" height="17" fill="#ff0000"/><rect x="192" y="562" width="4" height="16" fill="#fff"/><rect x="198" y="562" width="6" height="16" fill="#ff0000"/><rect x="199" y="563" width="4" height="15" fill="#fff"/><rect x="205" y="561" width="6" height="17" fill="#ff0000"/><rect x="206" y="562" width="4" height="16" fill="#fff"/><rect x="212" y="562" width="6" height="16" fill="#ff0000"/><rect x="213" y="563" width="4" height="15" fill="#fff"/><rect x="219" y="562" width="6" height="16" fill="#008000"/><rect x="226" y="561" width="6" height="17" fill="#ff0000"/><rect x="227" y="562" width="4" height="16" fill="#fff"/><rect x="233" y="561" width="6" height="17" fill="#008000"/><rect x="240" y="553" width="6" height="25" fill="#ff0000"/><rect x="241" y="554" width="4" height="24" fill="#fff"/><rect x="247" y="557" width="6" height="21" fill="#008000"/><rect x="254" y="562" width="6" height="16" fill="#008000"/><rect x="261" y="561" width="6" height="17" fill="#008000"/><rect x="268" y="564" width="6" height="14" fill="#ff0000"/><rect x="269" y="565" width="4" height="13" fill="#fff"/><rect x="275" y="564" width="6" height="14" fill="#008000"/><rect x="282" y="565" width="6" height="13" fill="#008000"/><rect x="289" y="565" width="6" height="13" fill="#ff0000"/><rect x="290" y="566" width="4" height="12" fill="#fff"/><rect x="296" y="562" width="6" height="16" fill="#008000"/><rect x="303" y="564" width="6" height="14" fill="#ff0000"/><rect x="304" y="565" width="4" height="13" fill="#fff"/><rect x="310" y="563" width="6" height="15" fill="#008000"/><rect x="317" y="563" width="6" height="15" fill="#008000"/><rect x="324" y="560" width="6" height="18" fill="#ff0000"/><rect x="325" y="561" width="4" height="17" fill="#fff"/><rect x="331" y="560" width="6" height="18" fill="#008000"/><rect x="338" y="562" width="6" height="16" fill="#008000"/><rect x="345" y="562" width="6" height="16" fill="#008000"/><rect x="352" y="562" width="6" height="16" fill="#008000"/><rect x="359" y="563" width="6" height="15" fill="#ff0000"/><rect x="360" y="564" width="4" height="14" fill="#fff"/><rect x="366" y="564" width="6" height="14" fill="#008000"/><rect x="373" y="564" width="6" height="14" fill="#ff0000"/><rect x="374" y="565" width="4" height="13" fill="#fff"/><rect x="380" y="561" width="6" height="17" fill="#ff0000"/><rect x="381" y="562" width="4" height="16" fill="#fff"/><rect x="387" y="562" width="6" height="16" fill="#ff0000"/><rect x="388" y="563" width="4" height="15" fill="#fff"/><rect x="394" y="560" width="6" height="18" fill="#ff0000"/><rect x="395" y="561" width="4" height="17" fill="#fff"/><rect x="401" y="557" width="6" height="21" fill="#ff0000"/><rect x="402" y="558" width="4" height="20" fill="#fff"/><rect x="408" y="557" width="6" height="21" fill="#ff0000"/><rect x="409" y="558" width="4" height="20" fill="#fff"/><rect x="415" y="559" width="6" height="19" fill="#008000"/><rect x="422" y="559" width="6" height="19" fill="#008000"/><rect x="429" y="558" width="6" height="20" fill="#008000"/><rect x="436" y="563" width="6" height="15" fill="#ff0000"/><rect x="437" y="564" width="4" height="14" fill="#fff"/><rect x="443" y="563" width="6" height="15" fill="#008000"/><rect x="450" y="562" width="6" height="16" fill="#ff0000"/><rect x="451" y="563" width="4" height="15" fill="#fff"/><rect x="457" y="563" width="6" height="15" fill="#008000"/><rect x="464" y="560" width="6" height="18" fill="#ff0000"/><rect x="465" y="561" width="4" height="17" fill="#fff"/><rect x="471" y="557" width="6" height="21" fill="#ff0000"/><rect x="472" y="558" width="4" height="20" fill="#fff"/><rect x="478" y="557" width="6" height="21" fill="#ff0000"/><rect x="479" y="558" width="4" height="20" fill="#fff"/><rect x="485" y="557" width="6" height="21" fill="#008000"/><rect x="492" y="554" width="6" height="24" fill="#ff0000"/><rect x="493" y="555" width="4" height="23" fill="#fff"/><rect x="499" y="551" width="6" height="27" fill="#ff0000"/><rect x="500" y="552" width="4" height="26" fill="#fff"/><rect x="506" y="555" width="6" height="23" fill="#008000"/><rect x="513" y="557" width="6" height="21" fill="#ff0000"/><rect x="514" y="558" width="4" height="20" fill="#fff"/><rect x="520" y="557" width="6" height="21" fill="#ff0000"/><rect x="521" y="558" width="4" height="20" fill="#fff"/><rect x="527" y="553" width="6" height="25" fill="#008000"/><rect x="534" y="557" width="6" height="21" fill="#ff0000"/><rect x="535" y="558" width="4" height="20" fill="#fff"/><rect x="541" y="555" width="6" height="23" fill="#ff0000"/><rect x="542" y="556" width="4" height="22" fill="#fff"/><rect x="548" y="553" width="6" height="25" fill="#ff0000"/><rect x="549" y="554" width="4" height="24" fill="#fff"/><rect x="555" y="551" width="6" height="27" fill="#ff0000"/><rect x="556" y="552" width="4" height="26" fill="#fff"/><rect x="562" y="548" width="6" height="30" fill="#008000"/><rect x="569" y="555" width="6" height="23" fill="#008000"/><rect x="576" y="555" width="6" height="23" fill="#ff0000"/><rect x="577" y="556" width="4" height="22" fill="#fff"/><rect x="583" y="558" width="6" height="20" fill="#008000"/><rect x="590" y="551" width="6" height="27" fill="#ff0000"/><rect x="591" y="552" width="4" height="26" fill="#fff"/><rect x="597" y="548" width="6" height="30" fill="#ff0000"/><rect x="598" y="549" width="4" height="29" fill="#fff"/><rect x="604" y="542" width="6" height="36" fill="#ff0000"/><rect x="605" y="543" width="4" height="35" fill="#fff"/><rect x="611" y="547" width="6" height="31" fill="#ff0000"/><rect x="612" y="548" width="4" height="30" fill="#fff"/><rect x="618" y="527" width="6" height="51" fill="#ff0000"/><rect x="619" y="528" width="4" height="50" fill="#fff"/><rect x="625" y="534" width="6" height="44" fill="#ff0000"/><rect x="626" y="535" width="4" height="43" fill="#fff"/><rect x="632" y="538" width="6" height="40" fill="#ff0000"/><rect x="633" y="539" width="4" height="39" fill="#fff"/><rect x="639" y="542" width="6" height="36" fill="#ff0000"/><rect x="640" y="543" width="4" height="35" fill="#fff"/><rect x="646" y="536" width="6" height="42" fill="#008000"/><rect x="653" y="540" width="6" height="38" fill="#ff0000"/><rect x="654" y="541" width="4" height="37" fill="#fff"/><rect x="660" y="540" width="6" height="38" fill="#008000"/><rect x="667" y="539" width="6" height="39" fill="#ff0000"/><rect x="668" y="540" width="4" height="38" fill="#fff"/><rect x="674" y="540" width="6" height="38" fill="#008000"/><rect x="681" y="549" width="6" height="29" fill="#ff0000"/><rect x="682" y="550" width="4" height="28" fill="#fff"/><rect x="688" y="545" width="6" height="33" fill="#ff0000"/><rect x="689" y="546" width="4" height="32" fill="#fff"/><rect x="695" y="544" width="6" height="34" fill="#008000"/><rect x="702" y="539" width="6" height="39" fill="#008000"/><rect x="709" y="541" width="6" height="37" fill="#008000"/><rect x="716" y="545" width="6" height="33" fill="#ff0000"/><rect x="717" y="546" width="4" height="32" fill="#fff"/><rect x="723" y="542" width="6" height="36" fill="#ff0000"/><rect x="724" y="543" width="4" height="35" fill="#fff"/><rect x="730" y="539" width="6" height="39" fill="#ff0000"/><rect x="731" y="540" width="4" height="38" fill="#fff"/><rect x="737" y="541" width="6" height="37" fill="#008000"/><rect x="744" y="542" width="6" height="36" fill="#008000"/><rect x="751" y="543" width="6" height="35" fill="#ff0000"/><rect x="752" y="544" width="4" height="34" fill="#fff"/><rect x="758" y="543" width="6" height="35" fill="#008000"/><rect x="765" y="542" width="6" height="36" fill="#008000"/><rect x="772" y="552" width="6" height="26" fill="#ff0000"/><rect x="773" y="553" width="4" height="25" fill="#fff"/><rect x="779" y="551" width="6" height="27" fill="#008000"/><rect x="786" y="555" width="6" height="23" fill="#ff0000"/><rect x="787" y="556" width="4" height="22" fill="#fff"/><rect x="793" y="550" width="6" height="28" fill="#ff0000"/><rect x="794" y="551" width="4" height="27" fill="#fff"/><rect x="800" y="536" width="6" height="42" fill="#ff0000"/><rect x="801" y="537" width="4" height="41" fill="#fff"/><rect x="807" y="532" width="6" height="46" fill="#ff0000"/><rect x="808" y="533" width="4" height="45" fill="#fff"/><rect x="814" y="535" width="6" height="43" fill="#ff0000"/><rect x="815" y="536" width="4" height="42" fill="#fff"/><rect x="821" y="532" width="6" height="46" fill="#ff0000"/><rect x="822" y="533" width="4" height="45" fill="#fff"/><rect x="828" y="535" width="6" height="43" fill="#008000"/><rect x="835" y="537" width="6" height="41" fill="#008000"/><rect x="842" y="530" width="6" height="48" fill="#008000"/><rect x="849" y="536" width="6" height="42" fill="#ff0000"/><rect x="850" y="537" width="4" height="41" fill="#fff"/><rect x="856" y="531" width="6" height="47" fill="#ff0000"/><rect x="857" y="532" width="4" height="46" fill="#fff"/><rect x="863" y="512" width="6" height="66" fill="#008000"/><rect x="870" y="532" width="6" height="46" fill="#ff0000"/><rect x="871" y="533" width="4" height="45" fill="#fff"/><rect x="877" y="537" width="6" height="41" fill="#ff0000"/><rect x="878" y="538" width="4" height="40" fill="#fff"/><rect x="884" y="540" width="6" height="38" fill="#ff0000"/><rect x="885" y="541" width="4" height="37" fill="#fff"/><rect x="891" y="540" width="6" height="38" fill="#008000"/><rect x="898" y="544" width="6" height="34" fill="#ff0000"/><rect x="899" y="545" width="4" height="33" fill="#fff"/><rect x="905" y="529" width="6" height="49" fill="#ff0000"/><rect x="906" y="530" width="4" height="48" fill="#fff"/><rect x="912" y="529" width="6" height="49" fill="#008000"/><rect x="919" y="540" width="6" height="38" fill="#ff0000"/><rect x="920" y="541" width="4" height="37" fill="#fff"/><rect x="926" y="534" width="6" height="44" fill="#ff0000"/><rect x="927" y="535" width="4" height="43" fill="#fff"/><rect x="933" y="536" width="6" height="42" fill="#ff0000"/><rect x="934" y="537" width="4" height="41" fill="#fff"/><rect x="940" y="533" width="6" height="45" fill="#ff0000"/><rect x="941" y="534" width="4" height="44" fill="#fff"/><rect x="947" y="527" width="6" height="51" fill="#ff0000"/><rect x="948" y="528" width="4" height="50" fill="#fff"/><rect x="954" y="529" width="6" height="49" fill="#008000"/><rect x="961" y="534" width="6" height="44" fill="#008000"/><rect x="968" y="535" width="6" height="43" fill="#008000"/><rect x="975" y="534" width="6" height="44" fill="#ff0000"/><rect x="976" y="535" width="4" height="43" fill="#fff"/><rect x="982" y="524" width="6" height="54" fill="#008000"/><rect x="989" y="532" width="6" height="46" fill="#008000"/><rect x="996" y="543" width="6" height="35" fill="#ff0000"/><rect x="997" y="544" width="4" height="34" fill="#fff"/><rect x="1003" y="541" width="6" height="37" fill="#008000"/><rect x="1010" y="545" width="6" height="33" fill="#008000"/><rect x="1017" y="543" width="6" height="35" fill="#008000"/><rect x="1024" y="549" width="6" height="29" fill="#008000"/><rect x="1031" y="550" width="6" height="28" fill="#008000"/><rect x="1038" y="539" width="6" height="39" fill="#ff0000"/><rect x="1039" y="540" width="4" height="38" fill="#fff"/><rect x="1045" y="520" width="6" height="58" fill="#ff0000"/><rect x="1046" y="521" width="4" height="57" fill="#fff"/><rect x="2" y="578" width="1236" height="2" fill="#808080"/><rect x="80" y="630" width="3" height="1" fill="#ff8080"/><rect x="87" y="623" width="4" height="5" fill="#ff8080"/><rect x="88" y="624" width="1" height="3" fill="#fff"/><rect x="94" y="619" width="4" height="5" fill="#ff8080"/><rect x="95" y="620" width="1" height="3" fill="#fff"/><rect x="101" y="617" width="4" height="5" fill="#ff8080"/><rect x="102" y="618" width="1" height="3" fill="#fff"/><rect x="108" y="615" width="4" height="4" fill="#ff8080"/><rect x="109" y="616" width="1" height="2" fill="#fff"/><rect x="115" y="615" width="4" height="1" fill="#ff8080"/><rect x="116" y="616" width="3" height="1" fill="#ff8080"/><rect x="122" y="619" width="3" height="1" fill="#008000"/><rect x="129" y="621" width="3" height="1" fill="#008000"/><rect x="136" y="623" width="4" height="1" fill="#008000"/><rect x="137" y="624" width="3" height="1" fill="#008000"/><rect x="143" y="626" width="4" height="3" fill="#008000"/><rect x="144" y="627" width="1" height="1" fill="#fff"/><rect x="150" y="628" width="4" height="7" fill="#008000"/><rect x="151" y="629" width="1" height="5" fill="#fff"/><rect x="157" y="632" width="4" height="7" fill="#008000"/><rect x="158" y="633" width="1" height="5" fill="#fff"/><rect x="164" y="637" width="4" height="7" fill="#008000"/><rect x="165" y="638" width="1" height="5" fill="#fff"/><rect x="171" y="640" width="4" height="9" fill="#008000"/><rect x="172" y="641" width="1" height="7" fill="#fff"/><rect x="178" y="645" width="4" height="11" fill="#008000"/><rect x="179" y="646" width="1" height="9" fill="#fff"/><rect x="185" y="650" width="4" height="10" fill="#008000"/><rect x="186" y="651" width="1" height="8" fill="#fff"/><rect x="192" y="654" width="4" height="6" fill="#008000"/><rect x="193" y="655" width="1" height="4" fill="#fff"/><rect x="199" y="657" width="4" height="3" fill="#008000"/><rect x="200" y="658" width="1" height="1" fill="#fff"/><rect x="206" y="658" width="3" height="1" fill="#008000"/><rect x="213" y="658" width="3" height="1" fill="#008000"/><rect x="220" y="659" width="3" height="1" fill="#008000"/><rect x="227" y="660" width="3" height="1" fill="#008000"/><rect x="234" y="660" width="3" height="1" fill="#008000"/><rect x="241" y="654" width="4" height="3" fill="#ff8080"/><rect x="242" y="655" width="1" height="1" fill="#fff"/><rect x="248" y="649" width="4" height="5" fill="#ff8080"/><rect x="249" y="650" width="1" height="3" fill="#fff"/><rect x="255" y="644" width="4" height="7" fill="#ff8080"/><rect x="256" y="645" width="1" height="5" fill="#fff"/><rect x="262" y="646" width="4" height="3" fill="#ff8080"/><rect x="263" y="647" width="1" height="1" fill="#fff"/><rect x="269" y="646" width="4" height="1" fill="#ff8080"/><rect x="270" y="647" width="3" height="1" fill="#ff8080"/><rect x="276" y="649" width="4" height="1" fill="#008000"/><rect x="277" y="650" width="3" height="1" fill="#008000"/><rect x="283" y="651" width="4" height="3" fill="#008000"/><rect x="284" y="652" width="1" height="1" fill="#fff"/><rect x="290" y="649" width="3" height="1" fill="#ff8080"/><rect x="297" y="648" width="3" height="1" fill="#ff8080"/><rect x="304" y="642" width="4" height="4" fill="#ff8080"/><rect x="305" y="643" width="1" height="2" fill="#fff"/><rect x="311" y="638" width="4" height="6" fill="#ff8080"/><rect x="312" y="639" width="1" height="4" fill="#fff"/><rect x="318" y="635" width="4" height="5" fill="#ff8080"/><rect x="319" y="636" width="1" height="3" fill="#fff"/><rect x="325" y="629" width="4" height="7" fill="#ff8080"/><rect x="326" y="630" width="1" height="5" fill="#fff"/><rect x="332" y="628" width="4" height="5" fill="#ff8080"/><rect x="333" y="629" width="1" height="3" fill="#fff"/><rect x="339" y="628" width="4" height="3" fill="#ff8080"/><rect x="340" y="629" width="1" height="1" fill="#fff"/><rect x="346" y="628" width="4" height="3" fill="#ff8080"/><rect x="347" y="629" width="1" height="1" fill="#fff"/><rect x="353" y="631" width="3" height="1" fill="#008000"/><rect x="360" y="629" width="3" height="1" fill="#ff8080"/><rect x="381" y="625" width="4" height="3" fill="#ff8080"/><rect x="382" y="626" width="1" height="1" fill="#fff"/><rect x="388" y="621" width="4" height="5" fill="#ff8080"/><rect x="389" y="622" width="1" height="3" fill="#fff"/><rect x="395" y="618" width="4" height="4" fill="#ff8080"/><rect x="396" y="619" width="1" height="2" fill="#fff"/><rect x="402" y="617" width="4" height="4" fill="#ff8080"/><rect x="403" y="618" width="1" height="2" fill="#fff"/><rect x="409" y="614" width="4" height="4" fill="#ff8080"/><rect x="410" y="615" width="1" height="2" fill="#fff"/><rect x="416" y="616" width="3" height="1" fill="#ff8080"/><rect x="423" y="620" width="4" height="3" fill="#008000"/><rect x="424" y="621" width="1" height="1" fill="#fff"/><rect x="430" y="625" width="4" height="10" fill="#008000"/><rect x="431" y="626" width="1" height="8" fill="#fff"/><rect x="437" y="631" width="4" height="11" fill="#008000"/><rect x="438" y="632" width="1" height="9" fill="#fff"/><rect x="444" y="638" width="4" height="11" fill="#008000"/><rect x="445" y="639" width="1" height="9" fill="#fff"/><rect x="451" y="642" width="4" height="8" fill="#008000"/><rect x="452" y="643" width="1" height="6" fill="#fff"/><rect x="458" y="646" width="4" height="7" fill="#008000"/><rect x="459" y="647" width="1" height="5" fill="#fff"/><rect x="465" y="648" width="4" height="3" fill="#008000"/><rect x="466" y="649" width="1" height="1" fill="#fff"/><rect x="472" y="648" width="4" height="1" fill="#008000"/><rect x="473" y="649" width="3" height="1" fill="#008000"/><rect x="479" y="647" width="3" height="1" fill="#ff8080"/><rect x="486" y="644" width="4" height="3" fill="#ff8080"/><rect x="487" y="645" width="1" height="1" fill="#fff"/><rect x="493" y="640" width="4" height="3" fill="#ff8080"/><rect x="494" y="641" width="1" height="1" fill="#fff"/><rect x="500" y="636" width="4" height="4" fill="#ff8080"/><rect x="501" y="637" width="1" height="2" fill="#fff"/><rect x="507" y="634" width="4" height="4" fill="#ff8080"/><rect x="508" y="635" width="1" height="2" fill="#fff"/><rect x="514" y="631" width="4" height="4" fill="#ff8080"/><rect x="515" y="632" width="1" height="2" fill="#fff"/><rect x="521" y="625" width="4" height="6" fill="#ff8080"/><rect x="522" y="626" width="1" height="4" fill="#fff"/><rect x="528" y="629" width="3" height="1" fill="#ff8080"/><rect x="535" y="632" width="3" height="1" fill="#008000"/><rect x="542" y="632" width="3" height="1" fill="#008000"/><rect x="549" y="625" width="4" height="4" fill="#ff8080"/><rect x="550" y="626" width="1" height="2" fill="#fff"/><rect x="556" y="619" width="4" height="6" fill="#ff8080"/><rect x="557" y="620" width="1" height="4" fill="#fff"/><rect x="563" y="620" width="4" height="4" fill="#ff8080"/><rect x="564" y="621" width="1" height="2" fill="#fff"/><rect x="570" y="623" width="3" height="1" fill="#ff8080"/><rect x="577" y="625" width="3" height="1" fill="#008000"/><rect x="584" y="627" width="4" height="3" fill="#008000"/><rect x="585" y="628" width="1" height="1" fill="#fff"/><rect x="591" y="624" width="4" height="1" fill="#ff8080"/><rect x="592" y="625" width="3" height="1" fill="#ff8080"/><rect x="598" y="622" width="4" height="3" fill="#ff8080"/><rect x="599" y="623" width="1" height="1" fill="#fff"/><rect x="605" y="618" width="4" height="4" fill="#ff8080"/><rect x="606" y="619" width="1" height="2" fill="#fff"/><rect x="612" y="615" width="4" height="5" fill="#ff8080"/><rect x="613" y="616" width="1" height="3" fill="#fff"/><rect x="619" y="613" width="4" height="5" fill="#ff8080"/><rect x="620" y="614" width="1" height="3" fill="#fff"/><rect x="626" y="614" width="4" height="1" fill="#ff8080"/><rect x="627" y="615" width="3" height="1" fill="#ff8080"/><rect x="633" y="614" width="3" height="1" fill="#ff8080"/><rect x="640" y="611" width="4" height="3" fill="#ff8080"/><rect x="641" y="612" width="1" height="1" fill="#fff"/><rect x="647" y="612" width="3" height="1" fill="#ff8080"/><rect x="654" y="612" width="3" height="1" fill="#ff8080"/><rect x="661" y="611" width="3" height="1" fill="#ff8080"/><rect x="668" y="613" width="4" height="1" fill="#008000"/><rect x="669" y="614" width="3" height="1" fill="#008000"/><rect x="675" y="614" width="4" height="1" fill="#008000"/><rect x="676" y="615" width="3" height="1" fill="#008000"/><rect x="689" y="612" width="3" height="1" fill="#ff8080"/><rect x="696" y="612" width="3" height="1" fill="#ff8080"/><rect x="703" y="613" width="4" height="1" fill="#008000"/><rect x="704" y="614" width="3" height="1" fill="#008000"/><rect x="717" y="612" width="3" height="1" fill="#ff8080"/><rect x="724" y="611" width="3" height="1" fill="#ff8080"/><rect x="731" y="611" width="3" height="1" fill="#ff8080"/><rect x="745" y="615" width="3" height="1" fill="#008000"/><rect x="752" y="615" width="3" height="1" fill="#008000"/><rect x="759" y="616" width="4" height="1" fill="#008000"/><rect x="760" y="617" width="3" height="1" fill="#008000"/><rect x="766" y="620" width="4" height="7" fill="#008000"/><rect x="767" y="621" width="1" height="5" fill="#fff"/><rect x="773" y="625" width="4" height="8" fill="#008000"/><rect x="774" y="626" width="1" height="6" fill="#fff"/><rect x="780" y="630" width="4" height="10" fill="#008000"/><rect x="781" y="631" width="1" height="8" fill="#fff"/><rect x="787" y="634" width="4" height="7" fill="#008000"/><rect x="788" y="635" width="1" height="5" fill="#fff"/><rect x="794" y="635" width="3" height="1" fill="#008000"/><rect x="801" y="627" width="4" height="4" fill="#ff8080"/><rect x="802" y="628" width="1" height="2" fill="#fff"/><rect x="808" y="621" width="4" height="6" fill="#ff8080"/><rect x="809" y="622" width="1" height="4" fill="#fff"/><rect x="815" y="617" width="4" height="6" fill="#ff8080"/><rect x="816" y="618" width="1" height="4" fill="#fff"/><rect x="822" y="614" width="4" height="6" fill="#ff8080"/><rect x="823" y="615" width="1" height="4" fill="#fff"/><rect x="829" y="613" width="4" height="4" fill="#ff8080"/><rect x="830" y="614" width="1" height="2" fill="#fff"/><rect x="836" y="614" width="4" height="1" fill="#ff8080"/><rect x="837" y="615" width="3" height="1" fill="#ff8080"/><rect x="850" y="615" width="3" height="1" fill="#ff8080"/><rect x="857" y="613" width="3" height="1" fill="#ff8080"/><rect x="864" y="616" width="3" height="1" fill="#008000"/><rect x="871" y="617" width="4" height="3" fill="#008000"/><rect x="872" y="618" width="1" height="1" fill="#fff"/><rect x="878" y="618" width="4" height="1" fill="#008000"/><rect x="879" y="619" width="3" height="1" fill="#008000"/><rect x="885" y="618" width="3" height="1" fill="#008000"/><rect x="892" y="620" width="4" height="3" fill="#008000"/><rect x="893" y="621" width="1" height="1" fill="#fff"/><rect x="899" y="622" width="4" height="3" fill="#008000"/><rect x="900" y="623" width="1" height="1" fill="#fff"/><rect x="906" y="621" width="3" height="1" fill="#ff8080"/><rect x="920" y="621" width="3" height="1" fill="#ff8080"/><rect x="927" y="619" width="4" height="1" fill="#ff8080"/><rect x="928" y="620" width="3" height="1" fill="#ff8080"/><rect x="934" y="615" width="4" height="3" fill="#ff8080"/><rect x="935" y="616" width="1" height="1" fill="#fff"/><rect x="941" y="613" width="4" height="4" fill="#ff8080"/><rect x="942" y="614" width="1" height="2" fill="#fff"/><rect x="948" y="613" width="4" height="1" fill="#ff8080"/><rect x="949" y="614" width="3" height="1" fill="#ff8080"/><rect x="955" y="614" width="3" height="1" fill="#ff8080"/><rect x="962" y="615" width="3" height="1" fill="#008000"/><rect x="969" y="617" width="4" height="3" fill="#008000"/><rect x="970" y="618" width="1" height="1" fill="#fff"/><rect x="976" y="618" width="3" height="1" fill="#008000"/><rect x="983" y="619" width="4" height="3" fill="#008000"/><rect x="984" y="620" width="1" height="1" fill="#fff"/><rect x="990" y="623" width="4" height="4" fill="#008000"/><rect x="991" y="624" width="1" height="2" fill="#fff"/><rect x="997" y="624" width="4" height="3" fill="#008000"/><rect x="998" y="625" width="1" height="1" fill="#fff"/><rect x="1004" y="628" width="4" height="5" fill="#008000"/><rect x="1005" y="629" width="1" height="3" fill="#fff"/><rect x="1011" y="632" width="4" height="9" fill="#008000"/><rect x="1012" y="633" width="1" height="7" fill="#fff"/><rect x="1018" y="638" width="4" height="12" fill="#008000"/><rect x="1019" y="639" width="1" height="10" fill="#fff"/><rect x="1025" y="644" width="4" height="11" fill="#008000"/><rect x="1026" y="645" width="1" height="9" fill="#fff"/><rect x="1032" y="650" width="4" height="9" fill="#008000"/><rect x="1033" y="651" width="1" height="7" fill="#fff"/><rect x="1039" y="650" width="3" height="1" fill="#008000"/><rect x="1046" y="642" width="4" height="5" fill="#ff8080"/><rect x="1047" y="643" width="1" height="3" fill="#fff"/><rect x="1053" y="634" width="4" height="8" fill="#ff8080"/><rect x="1054" y="635" width="1" height="6" fill="#fff"/><rect x="1060" y="628" width="4" height="8" fill="#ff8080"/><rect x="1061" y="629" width="1" height="6" fill="#fff"/><rect x="1067" y="624" width="4" height="8" fill="#ff8080"/><rect x="1068" y="625" width="1" height="6" fill="#fff"/><rect x="1074" y="623" width="4" height="6" fill="#ff8080"/><rect x="1075" y="624" width="1" height="4" fill="#fff"/><rect x="1081" y="620" width="4" height="5" fill="#ff8080"/><rect x="1082" y="621" width="1" height="3" fill="#fff"/><rect x="1088" y="619" width="4" height="5" fill="#ff8080"/><rect x="1089" y="620" width="1" height="3" fill="#fff"/><rect x="1095" y="617" width="4" height="4" fill="#ff8080"/><rect x="1096" y="618" width="1" height="2" fill="#fff"/><rect x="1102" y="616" width="4" height="3" fill="#ff8080"/><rect x="1103" y="617" width="1" height="1" fill="#fff"/><rect x="1109" y="615" width="4" height="3" fill="#ff8080"/><rect x="1110" y="616" width="1" height="1" fill="#fff"/><rect x="1116" y="614" width="3" height="1" fill="#ff8080"/><rect x="1123" y="614" width="3" height="1" fill="#ff8080"/><rect x="1130" y="613" width="3" height="1" fill="#ff8080"/><rect x="1144" y="615" width="3" height="1" fill="#008000"/><rect x="1151" y="618" width="4" height="6" fill="#008000"/><rect x="1152" y="619" width="1" height="4" fill="#fff"/><rect x="1158" y="623" width="4" height="6" fill="#008000"/><rect x="1159" y="624" width="1" height="4" fill="#fff"/><rect x="1165" y="626" width="4" height="6" fill="#008000"/><rect x="1166" y="627" width="1" height="4" fill="#fff"/><rect x="1172" y="629" width="4" height="6" fill="#008000"/><rect x="1173" y="630" width="1" height="4" fill="#fff"/><rect x="1179" y="631" width="4" height="5" fill="#008000"/><rect x="1180" y="632" width="1" height="3" fill="#fff"/><rect x="1186" y="634" width="4" height="3" fill="#008000"/><rect x="1187" y="635" width="1" height="1" fill="#fff"/><rect x="1193" y="635" width="4" height="1" fill="#008000"/><rect x="1194" y="636" width="3" height="1" fill="#008000"/><rect x="1200" y="636" width="4" height="1" fill="#008000"/><rect x="1201" y="637" width="3" height="1" fill="#008000"/><rect x="1207" y="637" width="3" height="1" fill="#008000"/><rect x="1214" y="638" width="3" height="1" fill="#008000"/><rect x="1221" y="638" width="3" height="1" fill="#008000"/><rect x="1228" y="638" width="3" height="1" fill="#008000"/><text x="130.3" y="613" class="sell" text-anchor="middle">卖</text><text x="432.0" y="613" class="sell" text-anchor="middle">卖</text><text x="656.0" y="613" class="sell" text-anchor="middle">卖</text><text x="684.0" y="613" class="sell" text-anchor="middle">卖</text><text x="719.0" y="613" class="sell" text-anchor="middle">卖</text><text x="754.0" y="613" class="sell" text-anchor="middle">卖</text><text x="873.0" y="613" class="sell" text-anchor="middle">卖</text><text x="971.0" y="613" class="sell" text-anchor="middle">卖</text><text x="1153.0" y="613" class="sell" text-anchor="middle">卖</text><line x1="72.5" y1="389.5" x2="103.5" y2="360.5" stroke="#ff0000" stroke-width="1" shape-rendering="auto"/><line x1="290.5" y1="482.5" x2="313" y2="476.5" stroke="#0000ff" stroke-width="1" shape-rendering="auto"/><path d="M950.5 169.5 Q961 170.5 970.5 174.5" stroke="#0000ff" fill="none" stroke-width="1" shape-rendering="auto"/><path d="M583 147 L591 147 L587 151 Z" fill="#000"/><path d="M1044 670 Q1053 667 1062 670" stroke="#808080" fill="none" stroke-width="1" shape-rendering="auto"/><text x="1233" y="159" class="lab" fill="#0000ff" stroke="#0000ff" stroke-width="0.12" text-anchor="end">133.33%(120)</text><text x="1233" y="182" class="lab" fill="#008080" stroke="#008080" stroke-width="0.12" text-anchor="end">237.5%(135)</text><text x="1233" y="199" class="lab" fill="#800000" stroke="#800000" stroke-width="0.12" text-anchor="end">225.0%(90)</text><text x="1233" y="232" class="lab" fill="#ff0000" stroke="#ff0000" stroke-width="0.12" text-anchor="end">200.0%(0)</text><text x="1233" y="268" class="lab" fill="#ff0000" stroke="#ff0000" stroke-width="0.12" text-anchor="end">100.0%(0)</text><text x="1233" y="315" class="lab" fill="#008080" stroke="#008080" stroke-width="0.12" text-anchor="end">137.5%(135)</text><text x="1233" y="332" class="lab" fill="#800000" stroke="#800000" stroke-width="0.12" text-anchor="end">125.0%(90)</text><text x="1233" y="365" class="lab" fill="#ff0000" stroke="#ff0000" stroke-width="0.12" text-anchor="end">100.0%(0)</text><text x="1233" y="377" class="lab" fill="#808080" stroke="#808080" stroke-width="0.12" text-anchor="end">66.67%(240)</text><text x="1233" y="432" class="lab" fill="#800080" stroke="#800080" stroke-width="0.12" text-anchor="end">50.0%(180)</text><text x="1233" y="448" class="lab" fill="#008080" stroke="#008080" stroke-width="0.12" text-anchor="end">37.5%(135)</text><text x="1233" y="465" class="lab" fill="#800000" stroke="#800000" stroke-width="0.12" text-anchor="end">25.0%(90)</text><text x="1233" y="487" class="lab" fill="#0000ff" stroke="#0000ff" stroke-width="0.12" text-anchor="end">33.33%(120)</text><rect x="1176" y="456" width="20" height="12" fill="#fff"/><text x="1177" y="467" class="sm" fill="#ff0000">346</text><text x="1176" y="170" class="sm" fill="#ff0000">2</text><text x="1138" y="145" class="song13" fill="#0000ff" xml:space="preserve"><tspan class="nar">1A0001</tspan><tspan x="1187">上证指数</tspan></text><text x="4" y="136" class="song13" fill="#0000ff">日<tspan class="nar">K</tspan>线</text><text x="4" y="592" class="song13" fill="#0000ff">能量买卖</text><text x="428" y="170" class="mono" fill="#0000ff">1.382</text><text x="570" y="170" class="mono" fill="#008080">1.5</text><text x="713" y="170" class="mono" fill="#800080">1.618</text><text x="313" y="479" class="lab l11" fill="#0000ff">1991.0601</text><text x="971" y="185" class="lab l11" fill="#0000ff">2391.3501</text><text x="73" y="358" class="lab l11" fill="#ff0000"><tspan class="song12">上涨</tspan>171.2432<tspan class="song12">点</tspan>8.67%</text><text x="69.5" y="510" class="mono" fill="#404040" text-anchor="end">1951.2389</text><text x="69.5" y="534" class="mono" fill="#404040" text-anchor="end">220141170</text><text x="69.5" y="550" class="mono" fill="#404040" text-anchor="end">146760780</text><text x="69.5" y="566" class="mono" fill="#404040" text-anchor="end">73380390</text><text x="69.5" y="603" class="mono" fill="#404040" text-anchor="end">113.68</text><text x="69.5" y="621" class="mono" fill="#404040" text-anchor="end">85.26</text><text x="69.5" y="639" class="mono" fill="#404040" text-anchor="end">56.84</text><text x="69.5" y="657" class="mono" fill="#404040" text-anchor="end">28.42</text></svg><div class="abs title"><span>赢家江恩专业版[赢家内部服务平台] - [上证指数 SH1A0001-107日K线]</span><i>赢</i></div>
<div class="abs tline" style="top:9px;background:#56606c"></div>
<div class="abs tline" style="top:10px;background:#f0f0f0"></div>
<div class="abs" style="left:2px;top:15px;font-size:16px;line-height:18px;color:#e8001c;font-weight:500;font-family:'Liberation Sans','Noto Sans CJK SC',sans-serif;">赢</div>
<div class="abs mi" style="left:26px">文件</div>
<div class="abs mi" style="left:62px">浏览</div>
<div class="abs mi" style="left:98px">资讯</div>
<div class="abs mi" style="left:134px">江恩</div>
<div class="abs mi" style="left:170px">公式选股</div>
<div class="abs mi" style="left:230px">设置</div>
<div class="abs mi" style="left:266px">工具</div>
<div class="abs mi" style="left:302px">窗口</div>
<div class="abs mi" style="left:338px">交易委托</div>
<div class="abs mi" style="left:398px">帮助</div>
<div class="abs tline" style="top:37px;background:#a0a0a0"></div>
<div class="abs tline" style="top:38px;background:#fff"></div>
<div class="abs tline" style="top:64px;background:#a0a0a0"></div>
<div class="abs tline" style="top:65px;background:#fff"></div>
<div class="abs tline" style="top:90px;background:#a0a0a0"></div>
<div class="abs tline" style="top:91px;background:#fff"></div>
<div class="abs tline" style="top:116px;background:#a0a0a0"></div>
<div class="abs tline" style="top:117px;background:#fff"></div>
<div class="abs grip" style="left:3px;top:41px;height:21px"></div>
<div class="abs" style="left:4px;top:61px;width:2px;height:1px;background:#a0a0a0"></div>
<div class="abs grip" style="left:3px;top:67px;height:21px"></div>
<div class="abs" style="left:4px;top:87px;width:2px;height:1px;background:#a0a0a0"></div>
<div class="abs grip" style="left:3px;top:93px;height:21px"></div>
<div class="abs" style="left:4px;top:113px;width:2px;height:1px;background:#a0a0a0"></div>
<div class="abs grip" style="left:450px;top:93px;height:21px"></div>
<div class="abs" style="left:451px;top:113px;width:2px;height:1px;background:#a0a0a0"></div>
<div class="abs grip" style="left:667px;top:93px;height:21px"></div>
<div class="abs" style="left:668px;top:113px;width:2px;height:1px;background:#a0a0a0"></div>
<div class="abs sep" style="left:210px;top:67px;height:21px"></div>
<div class="abs sep" style="left:446px;top:67px;height:22px"></div>
<div class="abs sep" style="left:567px;top:67px;height:21px"></div>
<div class="abs sep" style="left:446px;top:91px;height:25px"></div>
<div class="abs sep" style="left:663px;top:91px;height:25px"></div>
<div class="abs pressed" style="left:39px;top:67px;width:23px;height:21px"></div>
<div class="abs pressed" style="left:162px;top:67px;width:23px;height:21px"></div>
<div class="abs pressed" style="left:185px;top:67px;width:23px;height:21px"></div>
<div class="abs pressed" style="left:473px;top:67px;width:23px;height:21px"></div>
<div class="abs pressed" style="left:542px;top:67px;width:23px;height:21px"></div>
<div class="abs tb" style="left:31px;top:44px">行情</div>
<div class="abs tb" style="left:84px;top:44px">板块</div>
<div class="abs tb" style="left:137px;top:44px">K线</div>
<div class="abs tb" style="left:186px;top:44px">P四方形</div>
<div class="abs tb" style="left:258px;top:44px">9P四方形</div>
<div class="abs tb" style="left:337px;top:44px">P数字表</div>
<div class="abs tb" style="left:409px;top:44px">T四方形</div>
<div class="abs tb" style="left:481px;top:44px">9T四方形</div>
<div class="abs tb" style="left:560px;top:44px">T数字表</div>
<div class="abs tb" style="left:632px;top:44px">江恩轮</div>
<div class="abs tb" style="left:697px;top:44px">赢家轮</div>
<div class="abs tb" style="left:763px;top:44px">六角形</div>
<div class="abs tb" style="left:826px;top:44px">赢家服务</div>
<svg class="chart" width="1238" height="120" viewBox="0 0 1238 120" shape-rendering="crispEdges"><g transform="translate(11,43)" ><rect x="0" y="1" width="16" height="13" fill="#000"/><rect x="1" y="2" width="14" height="2" fill="#0000d0"/><rect x="1" y="4" width="14" height="9" fill="#fff"/><rect x="1" y="6" width="14" height="1" fill="#000"/><rect x="1" y="8" width="14" height="1" fill="#000"/><rect x="1" y="10" width="14" height="1" fill="#000"/><rect x="1" y="12" width="14" height="1" fill="#000"/><rect x="3" y="5" width="1" height="8" fill="#fff"/><rect x="6" y="5" width="1" height="8" fill="#fff"/><rect x="9" y="5" width="1" height="8" fill="#fff"/><rect x="12" y="5" width="1" height="8" fill="#fff"/><rect x="1" y="2" width="1" height="1" fill="#fff"/><rect x="14" y="2" width="1" height="1" fill="#fff"/></g><g transform="translate(64,43)" ><rect x="0" y="0" width="8" height="8" fill="#000"/><rect x="1" y="1" width="6" height="6" fill="#008080"/><rect x="8" y="0" width="8" height="8" fill="#000"/><rect x="9" y="1" width="6" height="6" fill="#00ffff"/><rect x="0" y="8" width="8" height="8" fill="#000"/><rect x="1" y="9" width="6" height="6" fill="#00ffff"/><rect x="8" y="8" width="8" height="8" fill="#000"/><rect x="9" y="9" width="6" height="6" fill="#008080"/><rect x="6" y="6" width="4" height="4" fill="#00a0a0"/></g><g transform="translate(117,43)" ><rect x="1" y="7" width="1" height="9" fill="#ff0000"/><rect x="0" y="9" width="3" height="5" fill="#ff0000"/><rect x="1" y="10" width="1" height="3" fill="#fff"/><rect x="5" y="4" width="1" height="9" fill="#ff0000"/><rect x="4" y="6" width="3" height="5" fill="#ff0000"/><rect x="5" y="7" width="1" height="3" fill="#fff"/><rect x="9" y="3" width="1" height="8" fill="#008000"/><rect x="8" y="5" width="3" height="4" fill="#008000"/><rect x="9" y="6" width="1" height="2" fill="#fff"/><rect x="13" y="-1" width="1" height="10" fill="#ff0000"/><rect x="12" y="1" width="3" height="6" fill="#ff0000"/><rect x="13" y="2" width="1" height="4" fill="#fff"/></g><g transform="translate(167,44)" ><rect x="0.5" y="0.5" width="12" height="12" fill="#fff" stroke="#ff0000" stroke-width="1"/><rect x="0.5" y="0.5" width="12" height="12" fill="none" stroke="#000" stroke-width="1" stroke-dasharray="1 2"/><text x="6.5" y="9.3" font-size="7.5" fill="#000" font-weight="bold" text-anchor="middle" style="font-family:"Liberation Sans","Noto Sans CJK SC",sans-serif">PS</text></g><g transform="translate(239,44)" ><rect x="0.5" y="0.5" width="12" height="12" fill="#fff" stroke="#ff00ff" stroke-width="1"/><rect x="0.5" y="0.5" width="12" height="12" fill="none" stroke="#ff00ff" stroke-width="1" stroke-dasharray="1 2"/><text x="6.5" y="9.3" font-size="7.5" fill="#800000" font-weight="bold" text-anchor="middle" style="font-family:"Liberation Sans","Noto Sans CJK SC",sans-serif">P9</text></g><g transform="translate(318,44)" ><rect x="0.5" y="0.5" width="12" height="12" fill="#fff" stroke="#ff0000" stroke-width="1"/><rect x="0.5" y="0.5" width="12" height="12" fill="none" stroke="#000" stroke-width="1" stroke-dasharray="1 2"/><text x="6.5" y="9.3" font-size="7.5" fill="#000" font-weight="bold" text-anchor="middle" style="font-family:"Liberation Sans","Noto Sans CJK SC",sans-serif">PN</text></g><g transform="translate(390,44)" ><rect x="0.5" y="0.5" width="12" height="12" fill="#fff" stroke="#00c000" stroke-width="1"/><rect x="0.5" y="0.5" width="12" height="12" fill="none" stroke="#fff" stroke-width="1" stroke-dasharray="1 2"/><text x="6.5" y="9.3" font-size="7.5" fill="#800000" font-weight="bold" text-anchor="middle" style="font-family:"Liberation Sans","Noto Sans CJK SC",sans-serif">TS</text></g><g transform="translate(462,44)" ><rect x="0.5" y="0.5" width="12" height="12" fill="#fff" stroke="#00e0e0" stroke-width="1"/><rect x="0.5" y="0.5" width="12" height="12" fill="none" stroke="#fff" stroke-width="1" stroke-dasharray="1 2"/><text x="6.5" y="9.3" font-size="7.5" fill="#800000" font-weight="bold" text-anchor="middle" style="font-family:"Liberation Sans","Noto Sans CJK SC",sans-serif">T9</text></g><g transform="translate(541,44)" ><rect x="0.5" y="0.5" width="12" height="12" fill="#fff" stroke="#00c000" stroke-width="1"/><rect x="0.5" y="0.5" width="12" height="12" fill="none" stroke="#fff" stroke-width="1" stroke-dasharray="1 2"/><text x="6.5" y="9.3" font-size="7.5" fill="#800000" font-weight="bold" text-anchor="middle" style="font-family:"Liberation Sans","Noto Sans CJK SC",sans-serif">TN</text></g><g transform="translate(611,43)" shape-rendering="geometricPrecision"><circle cx="8" cy="8" r="7" fill="#f0e0e0" stroke="#800000" stroke-width="2"/><circle cx="8" cy="8" r="3.5" fill="none" stroke="#008000" stroke-width="1.2"/><circle cx="8" cy="8" r="1.5" fill="#ff0000"/><line x1="8" y1="2" x2="8" y2="14" stroke="#c08080" stroke-width="0.6" shape-rendering="auto"/><line x1="2" y1="8" x2="14" y2="8" stroke="#c08080" stroke-width="0.6" shape-rendering="auto"/></g><g transform="translate(677,43)" shape-rendering="geometricPrecision"><circle cx="8" cy="8" r="7.3" fill="#fff" stroke="#336699" stroke-width="1.3"/><text x="8" y="11.5" font-size="8.5" fill="#008000" font-weight="normal" text-anchor="middle" style="font-family:"Liberation Sans","Noto Sans CJK SC",sans-serif">Big</text></g><g transform="translate(742,43)" shape-rendering="geometricPrecision"><path d="M1 8 L4.5 2 L11.5 2 L15 8 L11.5 14 L4.5 14 Z" stroke="#ff0000" fill="#fff" stroke-width="1.3" shape-rendering="geometricPrecision"/><ellipse cx="8" cy="8" rx="4.2" ry="3.6" fill="none" stroke="#0000c0" stroke-width="1.6"/><circle cx="8" cy="8" r="1.3" fill="#0000c0"/></g><g transform="translate(808,43)" ><text x="6.5" y="14.5" font-size="18" fill="#6cc06c" font-weight="bold" text-anchor="middle" style="font-family:"Liberation Sans","Noto Sans CJK SC",sans-serif">$</text></g><g transform="translate(13,70)" ><text x="6" y="13" font-size="13" fill="#000" font-weight="bold" text-anchor="middle" style="font-family:"Liberation Sans","Noto Sans CJK SC",sans-serif">日</text></g><g transform="translate(30,70)" ><path d="M0 7 L6 7 L3 10 Z" stroke="none" fill="#000" stroke-width="1"/></g><g transform="translate(43,70)" ><path d="M1.5 6.5 Q1.5 3 5 3 L11 3 Q14.5 3 14.5 6.5 L11.5 6.5 L11 5 L5 5 L4.5 6.5 Z" stroke="#0000ff" fill="none" stroke-width="1" shape-rendering="geometricPrecision"/><path d="M4.5 8 L11.5 8 Q14 10 14 13.5 L2 13.5 Q2 10 4.5 8 Z" stroke="#0000ff" fill="none" stroke-width="1" shape-rendering="geometricPrecision"/><circle cx="8" cy="10.8" r="1.5" fill="none" stroke="#0000ff" stroke-width="1" shape-rendering="geometricPrecision"/></g><g transform="translate(64,70)" ><rect x="3.5" y="3.5" width="10" height="11" rx="2.5" fill="none" stroke="#0000ff" stroke-width="1.1" shape-rendering="geometricPrecision"/><rect x="6" y="2" width="5" height="2" fill="#0000ff"/><rect x="6" y="7" width="5" height="1" fill="#0000ff"/><rect x="6" y="9" width="5" height="1" fill="#0000ff"/><rect x="6" y="11" width="5" height="1" fill="#0000ff"/></g><g transform="translate(88,70)" ><path d="M1.5 15 L1.5 9.5 L4.5 9.5 L4.5 12.5 L7.5 12.5 L7.5 5.5 L9.5 5.5 L9.5 8.5 L11.5 8.5 L11.5 1.5 L13.5 1.5 L13.5 7" stroke="#800080" fill="none" stroke-width="1"/><text x="11" y="16" font-size="7" fill="#000" font-weight="bold" text-anchor="start" style="font-family:"Liberation Sans","Noto Sans CJK SC",sans-serif">3</text></g><g transform="translate(111,70)" ><path d="M1.5 15 L1.5 9.5 L4.5 9.5 L4.5 12.5 L7.5 12.5 L7.5 5.5 L9.5 5.5 L9.5 8.5 L11.5 8.5 L11.5 1.5 L13.5 1.5 L13.5 7" stroke="#800000" fill="none" stroke-width="1"/><text x="11" y="16" font-size="7" fill="#000" font-weight="bold" text-anchor="start" style="font-family:"Liberation Sans","Noto Sans CJK SC",sans-serif">9</text></g><g transform="translate(138,70)" ><rect x="3" y="1" width="1" height="14" fill="#000"/><rect x="1" y="4" width="5" height="9" fill="#000"/><rect x="2" y="5" width="3" height="7" fill="#fff"/></g><g transform="translate(153,70)" ><path d="M0 7 L6 7 L3 10 Z" stroke="none" fill="#000" stroke-width="1"/></g><g transform="translate(165,70)" ><path d="M3 2 L7 2 L7 4 L9 4 L9 2 L13 2 L13 6 L11 8 L13 10 L13 14 L10 14 L10 12 L8 12 L8 14 L4 14 L4 11 L2 9 L4 7 L2 5 Z" stroke="#800000" fill="none" stroke-width="1.3" shape-rendering="geometricPrecision"/><rect x="9" y="5" width="2" height="2" fill="#800000"/></g><g transform="translate(189,70)" ><rect x="1" y="1" width="1" height="15" fill="#800000"/><rect x="0" y="14" width="15" height="1" fill="#800000"/><path d="M2 1 L4 1 L4 3 L7 3 L7 5 L11 5 L11 7 L15 7 L15 8 L2 8 Z" stroke="none" fill="#ff00ff" stroke-width="1"/><path d="M2 8 L12 8 L12 9 L9 9 L9 11 L6 11 L6 13 L2 13 Z" stroke="none" fill="#008080" stroke-width="1"/></g><g transform="translate(217,70)" ><rect x="0" y="0" width="3" height="15" fill="#000"/><rect x="1" y="0" width="1" height="15" fill="#808000"/><path d="M15 1 L15 14 L3.5 7.5 Z" stroke="#000" fill="#808000" stroke-width="1" shape-rendering="geometricPrecision"/></g><g transform="translate(240,70)" ><rect x="12" y="0" width="3" height="15" fill="#000"/><rect x="13" y="0" width="1" height="15" fill="#808000"/><path d="M0 1 L0 14 L11.5 7.5 Z" stroke="#000" fill="#808000" stroke-width="1" shape-rendering="geometricPrecision"/></g><g transform="translate(264,70)" ><path d="M15 0 L15 8 L0 8 Z" stroke="none" fill="#a8a8a8" stroke-width="1" shape-rendering="geometricPrecision"/><path d="M15 8 L15 15.5 L0 8 Z" stroke="none" fill="#000" stroke-width="1" shape-rendering="geometricPrecision"/><path d="M15 8 L11 8 L15 3 Z" stroke="none" fill="#808080" stroke-width="1" shape-rendering="geometricPrecision"/></g><g transform="translate(287,70)" ><path d="M0 0 L0 8 L15 8 Z" stroke="none" fill="#a8a8a8" stroke-width="1" shape-rendering="geometricPrecision"/><path d="M0 8 L0 15.5 L15 8 Z" stroke="none" fill="#000" stroke-width="1" shape-rendering="geometricPrecision"/><path d="M0 3 L9 8 L0 8 Z" stroke="none" fill="#707070" stroke-width="1" shape-rendering="geometricPrecision"/></g><g transform="translate(308.5,69.5)" ><path d="M8 0.5 L15.5 8 L8 15.5 L0.5 8 Z" stroke="#000" fill="#ffff00" stroke-width="1" shape-rendering="geometricPrecision"/><rect x="4" y="7" width="8" height="2" fill="#000"/><path d="M3 8 L7 4.5 L7 11.5 Z" stroke="none" fill="#000" stroke-width="1" shape-rendering="geometricPrecision"/></g><g transform="translate(331.5,69.5)" ><path d="M8 0.5 L15.5 8 L8 15.5 L0.5 8 Z" stroke="#000" fill="#ffff00" stroke-width="1" shape-rendering="geometricPrecision"/><rect x="4" y="7" width="8" height="2" fill="#000"/><path d="M13 8 L9 4.5 L9 11.5 Z" stroke="none" fill="#000" stroke-width="1" shape-rendering="geometricPrecision"/></g><g transform="translate(354.5,69.5)" ><path d="M8 0.5 L15.5 8 L8 15.5 L0.5 8 Z" stroke="#000" fill="#ffff00" stroke-width="1" shape-rendering="geometricPrecision"/><rect x="4" y="7" width="8" height="2" fill="#000"/><path d="M2.5 8 L6 5 L6 11 Z" stroke="none" fill="#000" stroke-width="1" shape-rendering="geometricPrecision"/><path d="M13.5 8 L10 5 L10 11 Z" stroke="none" fill="#000" stroke-width="1" shape-rendering="geometricPrecision"/><rect x="7" y="3" width="1" height="10" fill="#808000"/></g><g transform="translate(377.5,69.5)" ><path d="M8 0.5 L15.5 8 L8 15.5 L0.5 8 Z" stroke="#000" fill="#ffff00" stroke-width="1" shape-rendering="geometricPrecision"/><rect x="2" y="7" width="12" height="2" fill="#000"/><path d="M7.5 8 L4.5 5 L4.5 11 Z" stroke="none" fill="#000" stroke-width="1" shape-rendering="geometricPrecision"/><path d="M8.5 8 L11.5 5 L11.5 11 Z" stroke="none" fill="#000" stroke-width="1" shape-rendering="geometricPrecision"/><rect x="7" y="2" width="1" height="4" fill="#808000"/><rect x="7" y="10" width="1" height="4" fill="#808000"/></g><g transform="translate(400.5,69.5)" ><path d="M8 0.5 L15.5 8 L8 15.5 L0.5 8 Z" stroke="#000" fill="#ffff00" stroke-width="1" shape-rendering="geometricPrecision"/><rect x="3" y="7" width="10" height="2" fill="#000"/><rect x="7" y="3" width="2" height="10" fill="#000"/><line x1="4.5" y1="4.5" x2="11.5" y2="11.5" stroke="#000" stroke-width="1" shape-rendering="auto"/><line x1="11.5" y1="4.5" x2="4.5" y2="11.5" stroke="#000" stroke-width="1" shape-rendering="auto"/></g><g transform="translate(423.5,69.5)" ><path d="M8 0.5 L15.5 8 L8 15.5 L0.5 8 Z" stroke="#000" fill="#ffff00" stroke-width="1" shape-rendering="geometricPrecision"/><rect x="3" y="7" width="10" height="1" fill="#000"/><rect x="7" y="3" width="2" height="10" fill="#000"/><path d="M8 2 L11 5.5 L5 5.5 Z" stroke="none" fill="#000" stroke-width="1" shape-rendering="geometricPrecision"/><path d="M8 14 L11 10.5 L5 10.5 Z" stroke="none" fill="#000" stroke-width="1" shape-rendering="geometricPrecision"/></g><g transform="translate(453,70)" ><path d="M4.5 15 L1.5 10 Q1 8 3 8.5 L5 11 L5 3 Q6 2 7 3 L7 7 L7 2 Q8 1 9 2 L9 7 L9.5 3 Q10.5 2 11.2 3.2 L11.2 8 L12 5 Q13 4.5 13.5 5.5 L13.5 11 L11.5 15 Z" stroke="#000" fill="#fff" stroke-width="1" shape-rendering="geometricPrecision"/></g><g transform="translate(477,70)" ><rect x="1" y="7" width="13" height="1" fill="#000"/><rect x="7" y="1" width="1" height="14" fill="#000"/></g><g transform="translate(499,70)" ><line x1="0.5" y1="3.5" x2="4.5" y2="11.5" stroke="#000" stroke-width="1" shape-rendering="auto"/><line x1="4.5" y1="11.5" x2="10.5" y2="3.5" stroke="#000" stroke-width="1" shape-rendering="auto"/><line x1="10.5" y1="3.5" x2="15.5" y2="9.5" stroke="#000" stroke-width="1" shape-rendering="auto"/><circle cx="4.5" cy="11.5" r="2" fill="#fff" stroke="#ff0000" stroke-width="1.3" shape-rendering="geometricPrecision"/><circle cx="10.5" cy="3.5" r="2" fill="#fff" stroke="#ff0000" stroke-width="1.3" shape-rendering="geometricPrecision"/></g><g transform="translate(522,70)" ><path d="M1 2 L5 2 L5 3.5 L11 3.5 L11 2 L15 2 L15 7 L12 7 L12 14 L4 14 L4 7 L1 7 Z" stroke="#800080" fill="none" stroke-width="1.6" shape-rendering="geometricPrecision"/><rect x="7" y="6" width="5" height="2" fill="#800080"/><rect x="8" y="8" width="2" height="3" fill="#800080"/></g><g transform="translate(546,70)" ><path d="M3 3 Q5 1 7 3 L7 12 L4 12 Q1 10 3 8 Z" stroke="#008080" fill="none" stroke-width="1.4" shape-rendering="geometricPrecision"/><path d="M9 3 Q12 1 13 3 Q15 5 13.5 7 Q16 10 13 12 L11 14 L9 12 Z" stroke="#008080" fill="none" stroke-width="1.4" shape-rendering="geometricPrecision"/><line x1="7" y1="6" x2="9" y2="6" stroke="#008080" stroke-width="1.3"/><line x1="1" y1="13.5" x2="8" y2="13.5" stroke="#008080" stroke-width="1.3"/></g><g transform="translate(575,70)" ><rect x="1" y="2" width="14" height="13" fill="#000"/><rect x="2" y="3" width="12" height="2" fill="#00e0e0"/><rect x="2" y="5" width="12" height="9" fill="#fff"/><rect x="2" y="14" width="13" height="1" fill="#808080"/><rect x="15" y="4" width="1" height="11" fill="#808080"/><path d="M3 2 L4.5 0 L6 2 Z" stroke="#000" fill="#fff" stroke-width="0.8" shape-rendering="geometricPrecision"/><path d="M10 2 L11.5 0 L13 2 Z" stroke="#000" fill="#fff" stroke-width="0.8" shape-rendering="geometricPrecision"/><text x="8" y="13.5" font-size="10" fill="#ff0000" font-weight="normal" text-anchor="middle" style="font-family:"Liberation Sans","Noto Sans CJK SC",sans-serif">21</text></g><g transform="translate(597,70)" ><rect x="0" y="1" width="16" height="15" fill="#000"/><rect x="1" y="1" width="2" height="14" fill="#00c0c0"/><rect x="3" y="2" width="12" height="13" fill="#008080"/><rect x="5" y="3" width="9" height="3" fill="#fff"/><rect x="5" y="8" width="2" height="1" fill="#fff"/><rect x="5" y="10" width="2" height="1" fill="#fff"/><rect x="5" y="12" width="2" height="1" fill="#fff"/><rect x="8" y="8" width="2" height="1" fill="#fff"/><rect x="8" y="10" width="2" height="1" fill="#fff"/><rect x="8" y="12" width="2" height="1" fill="#fff"/><rect x="11" y="8" width="2" height="1" fill="#fff"/><rect x="11" y="10" width="2" height="1" fill="#fff"/><rect x="11" y="12" width="2" height="1" fill="#fff"/></g><g transform="translate(620,70)" ><rect x="0" y="0" width="16" height="16" fill="#000"/><rect x="3" y="1" width="10" height="14" fill="#fff"/><rect x="13" y="1" width="2" height="14" fill="#c0c0c0"/><rect x="5" y="3" width="7" height="1" fill="#0000ff"/><rect x="5" y="5" width="7" height="1" fill="#0000ff"/><rect x="5" y="7" width="7" height="1" fill="#0000ff"/><rect x="5" y="9" width="7" height="1" fill="#0000ff"/><rect x="1" y="2" width="2" height="1" fill="#fff"/><rect x="1" y="5" width="2" height="1" fill="#fff"/><rect x="1" y="8" width="2" height="1" fill="#fff"/><rect x="1" y="11" width="2" height="1" fill="#fff"/><rect x="1" y="14" width="2" height="1" fill="#fff"/><path d="M9 15 L13 11 L13 15 Z" stroke="none" fill="#808080" stroke-width="1" shape-rendering="geometricPrecision"/></g><g transform="translate(643,70)" ><rect x="0" y="1" width="16" height="14" fill="#000"/><rect x="1" y="2" width="3" height="12" fill="#ff0000"/><rect x="4" y="2" width="11" height="8" fill="#80e0e0"/><rect x="12" y="10" width="3" height="4" fill="#ff0000"/><rect x="4" y="11" width="8" height="4" fill="#fff"/><rect x="9" y="12" width="2" height="3" fill="#000"/><path d="M9 10 L15 4 L15 10 Z" stroke="none" fill="#008000" stroke-width="1" shape-rendering="geometricPrecision"/><path d="M4 10 L10 10 L7 7 Z" stroke="none" fill="#0000c0" stroke-width="1" shape-rendering="geometricPrecision"/><rect x="5" y="3" width="3" height="2" fill="#ffff00"/></g><g transform="translate(666,70)" ><rect x="4" y="0" width="8" height="7" fill="#000080"/><rect x="5" y="2" width="6" height="4" fill="#fff"/><rect x="0" y="4" width="8" height="7" fill="#000080"/><rect x="1" y="6" width="6" height="4" fill="#fff"/><rect x="2" y="7" width="2" height="2" fill="#808080"/><circle cx="11" cy="11" r="4.6" fill="#00c0e0" stroke="#000" stroke-width="1" shape-rendering="geometricPrecision"/><path d="M8 10 L11 8 L13 10 L12 13 L10 12 Z" stroke="none" fill="#c0c000" stroke-width="1" shape-rendering="geometricPrecision"/></g><g transform="translate(689,70)" ><rect x="5" y="0" width="10" height="9" fill="#000"/><rect x="6" y="1" width="8" height="6" fill="#c0c0a0"/><rect x="7" y="2" width="6" height="4" fill="#0000c0"/><rect x="6" y="9" width="10" height="5" fill="#808060"/><rect x="8" y="14" width="7" height="2" fill="#000"/><rect x="1" y="5" width="5" height="10" fill="#c0c0a0"/><rect x="2" y="6" width="3" height="2" fill="#0000c0"/><rect x="2" y="9" width="3" height="4" fill="#fff"/><rect x="2" y="13" width="3" height="1" fill="#ff0000"/><rect x="1" y="15" width="5" height="1" fill="#000"/></g><g transform="translate(11,96)" ><path d="M8 3.5 L12.5 -0.5 L16 1 L15.5 7 Z" stroke="#ff0000" fill="#ff0000" stroke-width="0.8" shape-rendering="geometricPrecision"/><path d="M8 3.5 L15.5 7 L10 13.2 L5 11.5 Z" stroke="#000" fill="#989898" stroke-width="1.2" shape-rendering="geometricPrecision"/><path d="M5 11.5 L10 13.2 L4.5 15 Z" stroke="#ff0000" fill="#ff0000" stroke-width="0.8" shape-rendering="geometricPrecision"/><line x1="10" y1="5" x2="7.5" y2="11.5" stroke="#e0e0e0" stroke-width="0.8" shape-rendering="auto"/><line x1="12.5" y1="6" x2="9.5" y2="12.5" stroke="#404040" stroke-width="0.8" shape-rendering="auto"/><path d="M0.3 12 L3.4 15 L5 14.2" stroke="#000" fill="none" stroke-width="1.1" shape-rendering="geometricPrecision"/></g><g transform="translate(35,96)" ><rect x="0" y="7" width="14" height="1" fill="#000"/><rect x="2" y="2" width="1" height="13" fill="#000"/><rect x="6" y="2" width="1" height="13" fill="#000"/><rect x="10" y="2" width="1" height="13" fill="#000"/></g><g transform="translate(57,96)" ><rect x="0" y="2" width="16" height="1" fill="#000"/><rect x="2" y="0" width="1" height="5" fill="#000"/><rect x="6" y="0" width="1" height="5" fill="#000"/><rect x="10" y="0" width="1" height="5" fill="#000"/><rect x="14" y="0" width="1" height="5" fill="#000"/><text x="8" y="15.5" font-size="10.5" fill="#808000" font-weight="500" text-anchor="middle" style="font-family:"Liberation Serif","Noto Serif CJK SC",serif">金</text></g><g transform="translate(80,96)" ><rect x="0" y="2" width="16" height="1" fill="#000"/><rect x="2" y="0" width="1" height="5" fill="#000"/><rect x="6" y="0" width="1" height="5" fill="#000"/><rect x="10" y="0" width="1" height="5" fill="#000"/><rect x="14" y="0" width="1" height="5" fill="#000"/><text x="8" y="15.5" font-size="10.5" fill="#808000" font-weight="500" text-anchor="middle" style="font-family:"Liberation Serif","Noto Serif CJK SC",serif">金</text></g><g transform="translate(103,96)" ><rect x="0" y="2" width="16" height="1" fill="#000"/><rect x="2" y="0" width="1" height="5" fill="#000"/><rect x="6" y="0" width="1" height="5" fill="#000"/><rect x="10" y="0" width="1" height="5" fill="#000"/><rect x="14" y="0" width="1" height="5" fill="#000"/><text x="8.5" y="15" font-size="11" fill="#000" font-weight="normal" text-anchor="middle" style="font-family:"Liberation Sans","Noto Sans CJK SC",sans-serif">F</text></g><g transform="translate(126,96)" ><rect x="0" y="2" width="16" height="1" fill="#000"/><rect x="2" y="0" width="1" height="5" fill="#000"/><rect x="6" y="0" width="1" height="5" fill="#000"/><rect x="10" y="0" width="1" height="5" fill="#000"/><rect x="14" y="0" width="1" height="5" fill="#000"/><path d="M2 6.5 L10 6.5 Q14.5 7.5 13.5 11.5 Q12 15.5 7.5 15 Q3.5 14 5 11 Q7 9 9.5 10.5 Q11 12.5 8.5 13" stroke="#000" fill="none" stroke-width="1.1" shape-rendering="geometricPrecision"/></g><g transform="translate(149,96)" ><path d="M8 1 L12 0 L14 3 L13 5 Z" stroke="none" fill="#ff0000" stroke-width="1" shape-rendering="geometricPrecision"/><path d="M8 1 L13 5 L8 10 L5 8 Z" stroke="#000" fill="#b0b0b0" stroke-width="0.8" shape-rendering="geometricPrecision"/><path d="M5 8 L8 10 L4 11 Z" stroke="none" fill="#ff0000" stroke-width="1" shape-rendering="geometricPrecision"/><rect x="0" y="13" width="16" height="1" fill="#000"/><rect x="0" y="11" width="1" height="5" fill="#000"/><rect x="4" y="12" width="1" height="3" fill="#000"/><rect x="7" y="12" width="1" height="3" fill="#000"/><rect x="10" y="12" width="1" height="3" fill="#000"/><rect x="13" y="12" width="1" height="3" fill="#000"/></g><g transform="translate(172,96)" ><circle cx="8" cy="8.5" r="7" fill="none" stroke="#000" stroke-width="1.1" shape-rendering="geometricPrecision"/><rect x="2" y="8" width="13" height="1" fill="#000"/><rect x="3" y="6" width="1" height="5" fill="#000"/><rect x="5" y="6" width="1" height="5" fill="#000"/><rect x="7" y="6" width="1" height="5" fill="#000"/><rect x="9" y="6" width="1" height="5" fill="#000"/><rect x="11" y="6" width="1" height="5" fill="#000"/><rect x="13" y="6" width="1" height="5" fill="#000"/><line x1="11" y1="5" x2="15" y2="1" stroke="#000" stroke-width="1" shape-rendering="auto"/></g><g transform="translate(195,96)" ><rect x="0" y="7" width="16" height="1" fill="#000"/><rect x="2" y="2" width="1" height="13" fill="#000"/><rect x="6" y="2" width="1" height="13" fill="#000"/><rect x="10" y="2" width="1" height="13" fill="#000"/><rect x="14" y="2" width="1" height="13" fill="#000"/></g><g transform="translate(218,96)" ><rect x="0" y="2" width="16" height="1" fill="#000"/><rect x="2" y="0" width="1" height="5" fill="#000"/><rect x="6" y="0" width="1" height="5" fill="#000"/><rect x="10" y="0" width="1" height="5" fill="#000"/><rect x="14" y="0" width="1" height="5" fill="#000"/><text x="1.5" y="15.5" font-size="12" fill="#000" font-weight="normal" text-anchor="start" style="font-family:"Liberation Sans","Noto Sans CJK SC",sans-serif">n</text><text x="9" y="11.5" font-size="7.5" fill="#000" font-weight="normal" text-anchor="start" style="font-family:"Liberation Sans","Noto Sans CJK SC",sans-serif">2</text></g><g transform="translate(241,96)" ><path d="M0.5 15 L8 2 L14 8 Z" stroke="#404040" fill="none" stroke-width="1" shape-rendering="geometricPrecision"/><rect x="7" y="1" width="1" height="15" fill="#808080"/><rect x="10" y="1" width="1" height="15" fill="#808080"/><rect x="15" y="1" width="1" height="15" fill="#808080"/></g><g transform="translate(264,96)" ><rect x="0" y="9" width="16" height="1" fill="#ff0000"/><rect x="7" y="1" width="1" height="15" fill="#ff0000"/><path d="M15 6 Q12 1 7 2.5 Q1 5 2 10 Q4 14.5 8.5 13 Q11 11.5 10 8.5 Q8 6.5 6 8.5" stroke="#000" fill="none" stroke-width="1.1" shape-rendering="geometricPrecision"/></g><g transform="translate(287,96)" ><circle cx="8" cy="8" r="6.5" fill="none" stroke="#a0a0a0" stroke-width="1" shape-rendering="geometricPrecision"/><circle cx="8" cy="8" r="3.5" fill="none" stroke="#a0a0a0" stroke-width="1" shape-rendering="geometricPrecision"/><line x1="3" y1="3" x2="13" y2="13" stroke="#008080" stroke-width="0.9" shape-rendering="auto"/><line x1="13" y1="3" x2="3" y2="13" stroke="#008080" stroke-width="0.9" shape-rendering="auto"/><line x1="1" y1="8" x2="15" y2="8" stroke="#ff4040" stroke-width="0.8" shape-rendering="auto"/><line x1="8" y1="1" x2="8" y2="15" stroke="#ff4040" stroke-width="0.8" shape-rendering="auto"/><rect x="7" y="7" width="2" height="2" fill="#ff0000"/><rect x="0" y="8" width="1" height="1" fill="#ff0000"/><rect x="15" y="8" width="1" height="1" fill="#ff0000"/><rect x="8" y="0" width="1" height="1" fill="#ff0000"/><rect x="8" y="15" width="1" height="1" fill="#ff0000"/><rect x="2" y="2" width="1" height="1" fill="#008080"/><rect x="13" y="2" width="1" height="1" fill="#008080"/><rect x="2" y="13" width="1" height="1" fill="#008080"/><rect x="13" y="13" width="1" height="1" fill="#008080"/></g><g transform="translate(310,96)" ><rect x="1.5" y="1.5" width="13" height="13" fill="none" stroke="#a0a0a0"/><rect x="3.5" y="3.5" width="9" height="9" fill="none" stroke="#909090"/><rect x="5.5" y="5.5" width="5" height="5" fill="none" stroke="#a0a0a0"/><rect x="0" y="8" width="16" height="1" fill="#40a0a0"/><rect x="8" y="0" width="1" height="16" fill="#40a0a0"/><rect x="7" y="7" width="3" height="3" fill="#e06060"/><rect x="8" y="8" width="1" height="1" fill="#ff0000"/><rect x="0" y="0" width="1" height="1" fill="#ff0000"/><rect x="15" y="0" width="1" height="1" fill="#ff0000"/><rect x="0" y="15" width="1" height="1" fill="#ff0000"/><rect x="15" y="15" width="1" height="1" fill="#ff0000"/><rect x="0" y="8" width="1" height="1" fill="#ff0000"/><rect x="15" y="8" width="1" height="1" fill="#ff0000"/><rect x="8" y="0" width="1" height="1" fill="#ff0000"/><rect x="8" y="15" width="1" height="1" fill="#ff0000"/><line x1="1" y1="1" x2="15" y2="15" stroke="#ff6060" stroke-width="0.8" shape-rendering="auto"/><line x1="15" y1="1" x2="1" y2="15" stroke="#ff6060" stroke-width="0.8" shape-rendering="auto"/></g><g transform="translate(333,96)" ><rect x="1" y="2" width="1" height="14" fill="#000"/><rect x="8" y="2" width="1" height="14" fill="#000"/><line x1="1.5" y1="13" x2="8.5" y2="4" stroke="#000" stroke-width="1.2" shape-rendering="auto"/><rect x="11" y="2" width="1" height="4" fill="#000"/><rect x="14" y="2" width="1" height="4" fill="#000"/></g><g transform="translate(356,96)" ><rect x="0" y="3" width="16" height="1" fill="#000"/><rect x="0" y="1" width="1" height="5" fill="#000"/><rect x="15" y="1" width="1" height="5" fill="#000"/><rect x="4" y="1" width="1" height="5" fill="#000"/><rect x="8" y="1" width="1" height="5" fill="#000"/><text x="8" y="16" font-size="11" fill="#ff0000" font-weight="500" text-anchor="middle" style="font-family:"Liberation Serif","Noto Serif CJK SC",serif">神</text></g><g transform="translate(379,96)" ><rect x="0" y="3" width="16" height="1" fill="#000"/><rect x="0" y="1" width="1" height="5" fill="#000"/><rect x="15" y="1" width="1" height="5" fill="#000"/><rect x="4" y="1" width="1" height="5" fill="#000"/><rect x="8" y="1" width="1" height="5" fill="#000"/><text x="8" y="16" font-size="11" fill="#ff0000" font-weight="500" text-anchor="middle" style="font-family:"Liberation Serif","Noto Serif CJK SC",serif">赢</text></g><g transform="translate(402,96)" ><rect x="0" y="1" width="16" height="1" fill="#000"/><rect x="0" y="1" width="1" height="14" fill="#000"/><rect x="15" y="1" width="1" height="14" fill="#000"/><rect x="2" y="3" width="1" height="2" fill="#000"/><rect x="4" y="3" width="1" height="2" fill="#000"/><rect x="6" y="3" width="1" height="2" fill="#000"/><rect x="8" y="3" width="1" height="2" fill="#000"/><rect x="10" y="3" width="1" height="2" fill="#000"/><rect x="12" y="3" width="1" height="2" fill="#000"/><rect x="14" y="3" width="1" height="2" fill="#000"/><line x1="1" y1="6.5" x2="15" y2="6.5" stroke="#000" stroke-dasharray="1 1"/><line x1="1" y1="8.5" x2="15" y2="8.5" stroke="#000" stroke-dasharray="1 1"/><line x1="1" y1="10.5" x2="15" y2="10.5" stroke="#000" stroke-dasharray="1 1"/><rect x="0" y="14" width="4" height="1" fill="#000"/><rect x="12" y="14" width="4" height="1" fill="#000"/><rect x="5" y="12" width="1" height="3" fill="#000"/><rect x="8" y="12" width="2" height="1" fill="#000"/><rect x="8" y="14" width="2" height="1" fill="#000"/><rect x="12" y="12" width="2" height="1" fill="#000"/></g><g transform="translate(425,96)" ><rect x="0" y="3" width="1" height="10" fill="#000"/><rect x="15" y="3" width="1" height="10" fill="#000"/><rect x="7" y="1" width="1" height="15" fill="#000"/><rect x="1" y="7" width="14" height="1" fill="#000"/><path d="M1 7.5 L4 5 L4 10 Z" stroke="none" fill="#000" stroke-width="1" shape-rendering="geometricPrecision"/><path d="M15 7.5 L12 5 L12 10 Z" stroke="none" fill="#000" stroke-width="1" shape-rendering="geometricPrecision"/><path d="M7 7.5 L4.5 5.5 L4.5 9.5 Z" stroke="none" fill="#000" stroke-width="1" shape-rendering="geometricPrecision"/><path d="M8 7.5 L10.5 5.5 L10.5 9.5 Z" stroke="none" fill="#000" stroke-width="1" shape-rendering="geometricPrecision"/></g><g transform="translate(458,96)" ><rect x="5.5" y="1.5" width="9" height="9" fill="#fff" stroke="#000" stroke-width="1.6"/><rect x="1" y="1" width="1" height="10" fill="#808080"/><rect x="0" y="1" width="4" height="1" fill="#808080"/><rect x="0" y="10" width="4" height="1" fill="#808080"/><rect x="5" y="13" width="10" height="1" fill="#808080"/><rect x="5" y="11" width="1" height="5" fill="#808080"/><rect x="14" y="11" width="1" height="5" fill="#808080"/></g><g transform="translate(481,96)" ><line x1="1" y1="15" x2="4" y2="0" stroke="#ff0000" stroke-width="1.1" shape-rendering="auto"/><line x1="1" y1="15" x2="7" y2="0" stroke="#800000" stroke-width="1.1" shape-rendering="auto"/><line x1="1" y1="15" x2="14" y2="1" stroke="#000" stroke-width="1.1" shape-rendering="auto"/><line x1="1" y1="15" x2="15" y2="5" stroke="#ff0000" stroke-width="1.1" shape-rendering="auto"/><line x1="1" y1="15" x2="15" y2="9" stroke="#ff0000" stroke-width="1.1" shape-rendering="auto"/><line x1="1" y1="15" x2="15" y2="12" stroke="#800000" stroke-width="1.1" shape-rendering="auto"/><rect x="0" y="13" width="3" height="3" fill="#ff0000"/></g><g transform="translate(503,96)" ><rect x="1.5" y="2.5" width="12" height="12" fill="#fff" stroke="#000" stroke-width="1"/><line x1="1" y1="15" x2="6" y2="0" stroke="#800080" stroke-width="1.1" shape-rendering="auto"/><line x1="1" y1="15" x2="10" y2="0" stroke="#ff0000" stroke-width="1.1" shape-rendering="auto"/><line x1="1" y1="15" x2="15" y2="0" stroke="#ff0000" stroke-width="1.1" shape-rendering="auto"/><line x1="1" y1="15" x2="15" y2="5" stroke="#ff0000" stroke-width="1.1" shape-rendering="auto"/><line x1="1" y1="15" x2="15" y2="9" stroke="#800080" stroke-width="1.1" shape-rendering="auto"/><path d="M4 2 Q7 9 14 11" stroke="#800080" fill="none" stroke-width="1" shape-rendering="geometricPrecision"/></g><g transform="translate(527,96)" ><rect x="1.5" y="1.5" width="12" height="12" fill="#fff" stroke="#000" stroke-width="1"/><line x1="1.5" y1="1" x2="6" y2="16" stroke="#800080" stroke-width="1.1" shape-rendering="auto"/><line x1="1.5" y1="1" x2="10" y2="16" stroke="#ff0000" stroke-width="1.1" shape-rendering="auto"/><line x1="1.5" y1="1" x2="15" y2="15" stroke="#ff0000" stroke-width="1.1" shape-rendering="auto"/><line x1="1.5" y1="1" x2="15" y2="11" stroke="#ff0000" stroke-width="1.1" shape-rendering="auto"/><line x1="1.5" y1="1" x2="15" y2="6" stroke="#800080" stroke-width="1.1" shape-rendering="auto"/><path d="M4 13 Q7 6 14 4" stroke="#800080" fill="none" stroke-width="1" shape-rendering="geometricPrecision"/></g><g transform="translate(550,96)" ><line x1="0" y1="15" x2="15" y2="0" stroke="#000" stroke-width="1.2" shape-rendering="auto"/><line x1="0" y1="15" x2="15" y2="7" stroke="#000" stroke-width="1.2" shape-rendering="auto"/><line x1="0" y1="15" x2="14" y2="11" stroke="#000" stroke-width="1.2" shape-rendering="auto"/><path d="M0 15 L4 12 L4 15 Z" stroke="none" fill="#000" stroke-width="1" shape-rendering="geometricPrecision"/></g><g transform="translate(573,96)" ><line x1="0.5" y1="1" x2="6" y2="14" stroke="#000" stroke-width="1.1" shape-rendering="auto"/><line x1="6" y1="14" x2="11" y2="6" stroke="#000" stroke-width="1.1" shape-rendering="auto"/><line x1="11" y1="6" x2="14" y2="10" stroke="#000" stroke-width="1.1" shape-rendering="auto"/><line x1="0" y1="15.5" x2="16" y2="15.5" stroke="#000" stroke-dasharray="1 1"/></g><g transform="translate(595,96)" ><rect x="0" y="0" width="16" height="16" fill="#fff"/><rect x="0" y="0" width="1" height="16" fill="#909090"/><rect x="0" y="0" width="16" height="1" fill="#909090"/><rect x="4" y="0" width="1" height="16" fill="#909090"/><rect x="0" y="4" width="16" height="1" fill="#909090"/><rect x="8" y="0" width="1" height="16" fill="#909090"/><rect x="0" y="8" width="16" height="1" fill="#909090"/><rect x="12" y="0" width="1" height="16" fill="#909090"/><rect x="0" y="12" width="16" height="1" fill="#909090"/><rect x="15" y="0" width="1" height="16" fill="#909090"/><rect x="0" y="15" width="16" height="1" fill="#909090"/><rect x="2" y="0" width="1" height="16" fill="#d8d8d8"/><rect x="0" y="2" width="16" height="1" fill="#d8d8d8"/><rect x="6" y="0" width="1" height="16" fill="#d8d8d8"/><rect x="0" y="6" width="16" height="1" fill="#d8d8d8"/><rect x="10" y="0" width="1" height="16" fill="#d8d8d8"/><rect x="0" y="10" width="16" height="1" fill="#d8d8d8"/><rect x="14" y="0" width="1" height="16" fill="#d8d8d8"/><rect x="0" y="14" width="16" height="1" fill="#d8d8d8"/><rect x="0" y="0" width="1" height="1" fill="#ff0000"/><rect x="0" y="4" width="1" height="1" fill="#ff0000"/><rect x="0" y="8" width="1" height="1" fill="#ff0000"/><rect x="0" y="12" width="1" height="1" fill="#ff0000"/><rect x="0" y="15" width="1" height="1" fill="#ff0000"/><rect x="4" y="0" width="1" height="1" fill="#ff0000"/><rect x="4" y="4" width="1" height="1" fill="#ff0000"/><rect x="4" y="8" width="1" height="1" fill="#ff0000"/><rect x="4" y="12" width="1" height="1" fill="#ff0000"/><rect x="4" y="15" width="1" height="1" fill="#ff0000"/><rect x="8" y="0" width="1" height="1" fill="#ff0000"/><rect x="8" y="4" width="1" height="1" fill="#ff0000"/><rect x="8" y="8" width="1" height="1" fill="#ff0000"/><rect x="8" y="12" width="1" height="1" fill="#ff0000"/><rect x="8" y="15" width="1" height="1" fill="#ff0000"/><rect x="12" y="0" width="1" height="1" fill="#ff0000"/><rect x="12" y="4" width="1" height="1" fill="#ff0000"/><rect x="12" y="8" width="1" height="1" fill="#ff0000"/><rect x="12" y="12" width="1" height="1" fill="#ff0000"/><rect x="12" y="15" width="1" height="1" fill="#ff0000"/><rect x="15" y="0" width="1" height="1" fill="#ff0000"/><rect x="15" y="4" width="1" height="1" fill="#ff0000"/><rect x="15" y="8" width="1" height="1" fill="#ff0000"/><rect x="15" y="12" width="1" height="1" fill="#ff0000"/><rect x="15" y="15" width="1" height="1" fill="#ff0000"/><rect x="7" y="7" width="3" height="3" fill="#ff8080"/><rect x="8" y="8" width="1" height="1" fill="#ff0000"/><rect x="0" y="0" width="1" height="16" fill="#ff6060"/><rect x="15" y="0" width="1" height="16" fill="#ff6060"/></g><g transform="translate(619,96)" ><rect x="0" y="0" width="16" height="16" fill="#fff"/><rect x="0" y="0" width="1" height="16" fill="#909090"/><rect x="0" y="0" width="16" height="1" fill="#909090"/><rect x="4" y="0" width="1" height="16" fill="#909090"/><rect x="0" y="4" width="16" height="1" fill="#909090"/><rect x="8" y="0" width="1" height="16" fill="#909090"/><rect x="0" y="8" width="16" height="1" fill="#909090"/><rect x="12" y="0" width="1" height="16" fill="#909090"/><rect x="0" y="12" width="16" height="1" fill="#909090"/><rect x="15" y="0" width="1" height="16" fill="#909090"/><rect x="0" y="15" width="16" height="1" fill="#909090"/><rect x="2" y="0" width="1" height="16" fill="#d8d8d8"/><rect x="0" y="2" width="16" height="1" fill="#d8d8d8"/><rect x="6" y="0" width="1" height="16" fill="#d8d8d8"/><rect x="0" y="6" width="16" height="1" fill="#d8d8d8"/><rect x="10" y="0" width="1" height="16" fill="#d8d8d8"/><rect x="0" y="10" width="16" height="1" fill="#d8d8d8"/><rect x="14" y="0" width="1" height="16" fill="#d8d8d8"/><rect x="0" y="14" width="16" height="1" fill="#d8d8d8"/><rect x="0" y="0" width="1" height="1" fill="#ff0000"/><rect x="0" y="4" width="1" height="1" fill="#ff0000"/><rect x="0" y="8" width="1" height="1" fill="#ff0000"/><rect x="0" y="12" width="1" height="1" fill="#ff0000"/><rect x="0" y="15" width="1" height="1" fill="#ff0000"/><rect x="4" y="0" width="1" height="1" fill="#ff0000"/><rect x="4" y="4" width="1" height="1" fill="#ff0000"/><rect x="4" y="8" width="1" height="1" fill="#ff0000"/><rect x="4" y="12" width="1" height="1" fill="#ff0000"/><rect x="4" y="15" width="1" height="1" fill="#ff0000"/><rect x="8" y="0" width="1" height="1" fill="#ff0000"/><rect x="8" y="4" width="1" height="1" fill="#ff0000"/><rect x="8" y="8" width="1" height="1" fill="#ff0000"/><rect x="8" y="12" width="1" height="1" fill="#ff0000"/><rect x="8" y="15" width="1" height="1" fill="#ff0000"/><rect x="12" y="0" width="1" height="1" fill="#ff0000"/><rect x="12" y="4" width="1" height="1" fill="#ff0000"/><rect x="12" y="8" width="1" height="1" fill="#ff0000"/><rect x="12" y="12" width="1" height="1" fill="#ff0000"/><rect x="12" y="15" width="1" height="1" fill="#ff0000"/><rect x="15" y="0" width="1" height="1" fill="#ff0000"/><rect x="15" y="4" width="1" height="1" fill="#ff0000"/><rect x="15" y="8" width="1" height="1" fill="#ff0000"/><rect x="15" y="12" width="1" height="1" fill="#ff0000"/><rect x="15" y="15" width="1" height="1" fill="#ff0000"/><rect x="7" y="7" width="3" height="3" fill="#ff8080"/><rect x="8" y="8" width="1" height="1" fill="#ff0000"/><rect x="0" y="0" width="1" height="16" fill="#ff6060"/><rect x="15" y="0" width="1" height="16" fill="#ff6060"/><rect x="0" y="0" width="1" height="16" fill="#000"/><rect x="0" y="15" width="16" height="1" fill="#000"/><rect x="1" y="1" width="1" height="2" fill="#000"/><rect x="13" y="14" width="2" height="1" fill="#000"/><rect x="14" y="13" width="1" height="1" fill="#000"/></g><g transform="translate(642,96)" ><rect x="0" y="1" width="1" height="14" fill="#808080"/><rect x="11" y="2" width="1" height="13" fill="#808080"/><line x1="1" y1="7" x2="15" y2="1" stroke="#000" stroke-width="1.3" shape-rendering="auto"/><line x1="1" y1="11" x2="15" y2="5" stroke="#000" stroke-width="1.3" shape-rendering="auto"/><line x1="1" y1="15" x2="15" y2="9" stroke="#000" stroke-width="1.3" shape-rendering="auto"/></g><g transform="translate(675,96)" ><rect x="0" y="2" width="2" height="13" fill="#000"/><rect x="9" y="2" width="1" height="13" fill="#000"/><rect x="0" y="14" width="15" height="1" fill="#000"/><rect x="0" y="2" width="5" height="1" fill="#000"/><rect x="6" y="2" width="4" height="1" fill="#000"/><rect x="0" y="4" width="5" height="1" fill="#000"/><rect x="6" y="4" width="4" height="1" fill="#000"/><rect x="0" y="6" width="5" height="1" fill="#000"/><rect x="6" y="6" width="4" height="1" fill="#000"/><rect x="0" y="8" width="5" height="1" fill="#000"/><rect x="6" y="8" width="4" height="1" fill="#000"/><rect x="0" y="10" width="5" height="1" fill="#000"/><rect x="6" y="10" width="4" height="1" fill="#000"/><rect x="0" y="12" width="5" height="1" fill="#000"/><rect x="6" y="12" width="4" height="1" fill="#000"/><rect x="11" y="2" width="3" height="1" fill="#000"/><rect x="13" y="3" width="1" height="2" fill="#000"/><rect x="11" y="4" width="2" height="1" fill="#000"/><rect x="11" y="7" width="3" height="1" fill="#000"/><rect x="11" y="8" width="1" height="2" fill="#000"/><rect x="13" y="8" width="1" height="2" fill="#000"/><rect x="11" y="11" width="1" height="3" fill="#000"/><rect x="12" y="11" width="2" height="1" fill="#000"/><rect x="14" y="12" width="1" height="3" fill="#000"/></g><g transform="translate(698,96)" ><rect x="0" y="0" width="16" height="1" fill="#ff0000"/><rect x="0" y="15" width="6" height="1" fill="#ff0000"/><line x1="2" y1="15" x2="8" y2="1" stroke="#000" stroke-width="1.2" shape-rendering="auto"/><line x1="8" y1="1" x2="15" y2="1" stroke="#000" stroke-width="1"/><line x1="9" y1="6" x2="15" y2="0.5" stroke="#000" stroke-width="1" shape-rendering="auto"/><text x="11" y="16" font-size="11" fill="#ff0000" font-weight="normal" text-anchor="middle" style="font-family:"Liberation Sans","Noto Sans CJK SC",sans-serif">%</text></g><g transform="translate(722,96)" ><text x="7" y="14" font-size="14" fill="#000" font-weight="normal" text-anchor="middle" style="font-family:"Liberation Sans","Noto Sans CJK SC",sans-serif">%</text></g><g transform="translate(744,96)" ><rect x="0" y="1" width="16" height="1" fill="#000"/><rect x="8" y="5" width="8" height="1" fill="#000"/><rect x="10" y="9" width="6" height="1" fill="#000"/><rect x="0" y="15" width="16" height="1" fill="#000"/><text x="5" y="13.5" font-size="10" fill="#ff0000" font-weight="normal" text-anchor="middle" style="font-family:"Liberation Sans","Noto Sans CJK SC",sans-serif">%</text></g><g transform="translate(767,96)" ><circle cx="8" cy="8.5" r="7.3" fill="#f4f4f4" stroke="#a0a0a0" stroke-width="1" shape-rendering="geometricPrecision"/><text x="8" y="13" font-size="11" fill="#808000" font-weight="500" text-anchor="middle" style="font-family:"Liberation Serif","Noto Serif CJK SC",serif">金</text></g><g transform="translate(790,96)" ><rect x="0" y="1" width="16" height="1" fill="#000"/><rect x="9" y="5" width="7" height="1" fill="#000"/><rect x="11" y="9" width="5" height="1" fill="#000"/><rect x="0" y="15" width="16" height="1" fill="#000"/><text x="5.5" y="14" font-size="11" fill="#808000" font-weight="500" text-anchor="middle" style="font-family:"Liberation Serif","Noto Serif CJK SC",serif">金</text></g><g transform="translate(813,96)" ><rect x="2" y="1" width="1" height="15" fill="#000"/><rect x="0" y="1" width="5" height="1" fill="#000"/><rect x="0" y="15" width="5" height="1" fill="#000"/><rect x="0" y="6" width="5" height="1" fill="#000"/><rect x="0" y="10" width="5" height="1" fill="#000"/><path d="M10 1 L14 0 L16 4 L15 6 Z" stroke="none" fill="#ff0000" stroke-width="1" shape-rendering="geometricPrecision"/><path d="M10 1 L15 6 L10 12 L7 9 Z" stroke="#000" fill="#b0b0b0" stroke-width="0.8" shape-rendering="geometricPrecision"/><path d="M7 9 L10 12 L6 13 Z" stroke="none" fill="#ff0000" stroke-width="1" shape-rendering="geometricPrecision"/></g><g transform="translate(835,96)" ><rect x="0" y="1" width="16" height="1" fill="#ff0000"/><rect x="0" y="15" width="16" height="1" fill="#ff0000"/><rect x="0" y="8" width="16" height="1" fill="#808080"/><path d="M0 12 Q3 14 4.5 8 Q6 2 8 4 Q9.5 6 10.5 10 Q12 15 14 8 L15.5 4" stroke="#808080" fill="none" stroke-width="1.1" shape-rendering="geometricPrecision"/></g><g transform="translate(859,96)" ><rect x="0" y="0" width="16" height="1" fill="#ff0000"/><rect x="0" y="15" width="16" height="1" fill="#ff0000"/><text x="8" y="13" font-size="12" fill="#808000" font-weight="500" text-anchor="middle" style="font-family:"Liberation Serif","Noto Serif CJK SC",serif">金</text></g><g transform="translate(882,96)" ><line x1="0" y1="15.5" x2="16" y2="0.5" stroke="#000" stroke-width="1.2" shape-rendering="auto"/><rect x="8" y="7" width="8" height="1" fill="#000"/><rect x="5" y="10" width="11" height="1" fill="#000"/><rect x="1" y="14" width="15" height="1" fill="#000"/><text x="3.5" y="9" font-size="11.5" fill="#ff0000" font-weight="bold" text-anchor="middle" style="font-family:"Liberation Sans","Noto Sans CJK SC",sans-serif">J</text></g><g transform="translate(905,96)" ><line x1="0" y1="15.5" x2="16" y2="0.5" stroke="#000" stroke-width="1.2" shape-rendering="auto"/><rect x="8" y="7" width="8" height="1" fill="#000"/><rect x="5" y="10" width="11" height="1" fill="#000"/><rect x="1" y="14" width="15" height="1" fill="#000"/><text x="3.5" y="9" font-size="11.5" fill="#ff0000" font-weight="bold" text-anchor="middle" style="font-family:"Liberation Sans","Noto Sans CJK SC",sans-serif">F</text></g><g transform="translate(928,96)" ><text x="5" y="9.5" font-size="10.5" fill="#808000" font-weight="500" text-anchor="middle" style="font-family:"Liberation Serif","Noto Serif CJK SC",serif">金</text><line x1="0" y1="15.5" x2="16" y2="0.5" stroke="#000" stroke-width="1.2" shape-rendering="auto"/><rect x="8" y="7" width="8" height="1" fill="#000"/><rect x="5" y="10" width="11" height="1" fill="#000"/><rect x="1" y="14" width="15" height="1" fill="#000"/></g><g transform="translate(951,96)" ><text x="5.5" y="10" font-size="11" fill="#ff0000" font-weight="500" text-anchor="middle" style="font-family:"Liberation Serif","Noto Serif CJK SC",serif">神</text><line x1="0" y1="15.5" x2="16" y2="0.5" stroke="#000" stroke-width="1.2" shape-rendering="auto"/><rect x="8" y="7" width="8" height="1" fill="#000"/><rect x="5" y="10" width="11" height="1" fill="#000"/><rect x="1" y="14" width="15" height="1" fill="#000"/></g><g transform="translate(974,96)" ><text x="5.5" y="10.5" font-size="11" fill="#ff0000" font-weight="500" text-anchor="middle" style="font-family:"Liberation Serif","Noto Serif CJK SC",serif">赢</text><line x1="0" y1="15.5" x2="16" y2="0.5" stroke="#000" stroke-width="1.2" shape-rendering="auto"/><rect x="8" y="7" width="8" height="1" fill="#000"/><rect x="5" y="10" width="11" height="1" fill="#000"/><rect x="1" y="14" width="15" height="1" fill="#000"/></g><g transform="translate(997,96)" ><text x="5" y="9.5" font-size="10.5" fill="#ff0000" font-weight="500" text-anchor="middle" style="font-family:"Liberation Serif","Noto Serif CJK SC",serif">四</text><line x1="0" y1="15.5" x2="16" y2="0.5" stroke="#000" stroke-width="1.2" shape-rendering="auto"/><rect x="8" y="7" width="8" height="1" fill="#000"/><rect x="5" y="10" width="11" height="1" fill="#000"/><rect x="1" y="14" width="15" height="1" fill="#000"/></g></svg></body></html>
